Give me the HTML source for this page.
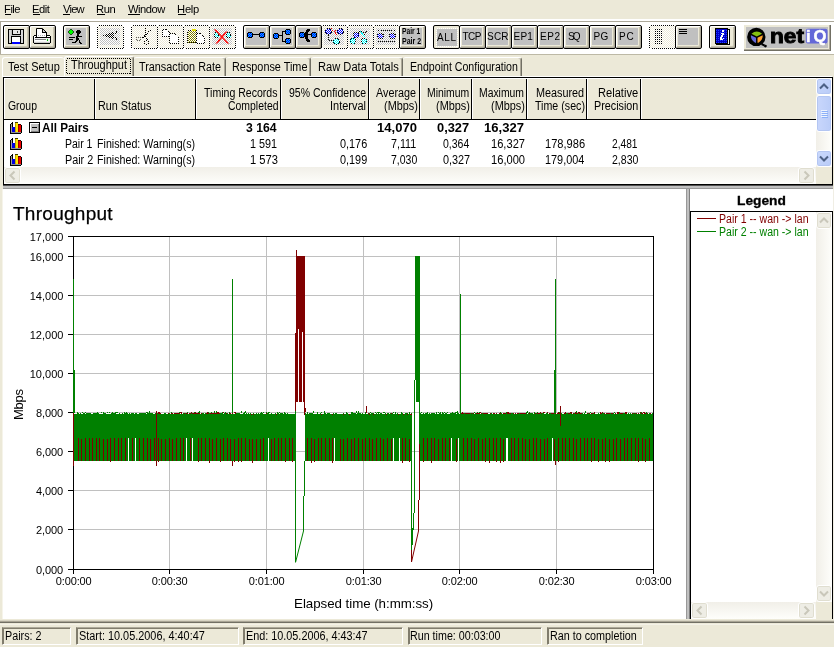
<!DOCTYPE html>
<html lang="en"><head><meta charset="utf-8"><title>Throughput</title>
<style>
html,body{margin:0;padding:0;}
body{width:834px;height:647px;overflow:hidden;background:#ECE9D8;position:relative;font-family:"Liberation Sans", Arial, sans-serif;font-size:11px;}
#app{position:absolute;left:0;top:0;width:834px;height:647px;overflow:hidden;will-change:transform;}
#app div,#app svg{position:absolute;box-sizing:border-box;}
.t{position:absolute;white-space:pre;}
</style></head>
<body><div id="app">
<div style="left:5px;top:14px;width:6px;height:1px;background:#000;"></div>
<div style="left:33px;top:14px;width:7px;height:1px;background:#000;"></div>
<div style="left:63px;top:14px;width:7px;height:1px;background:#000;"></div>
<div style="left:97px;top:14px;width:8px;height:1px;background:#000;"></div>
<div style="left:128px;top:14px;width:12px;height:1px;background:#000;"></div>
<div style="left:178px;top:14px;width:8px;height:1px;background:#000;"></div>
<div style="left:0px;top:19px;width:834px;height:2px;background:#FFFFFF;"></div>
<div style="left:0px;top:21px;width:834px;height:1px;background:#ACA899;"></div>
<div style="left:0px;top:22px;width:834px;height:32px;background:#FFFFFF;"></div>
<div style="left:0px;top:21px;width:1px;height:34px;background:#ACA899;"></div>
<div style="left:0px;top:54px;width:834px;height:1px;background:#BDB9A6;"></div>
<div style="left:3px;top:25px;width:27px;height:24px;border:1px solid #000;border-radius:2px;background:#ECE9D8;box-shadow:inset 1px 1px 0 #fff, inset -1px -1px 0 #ACA899, inset -2px -2px 0 #C9C5B2;"></div>
<div style="left:29px;top:25px;width:27px;height:24px;border:1px solid #000;border-radius:2px;background:#ECE9D8;box-shadow:inset 1px 1px 0 #fff, inset -1px -1px 0 #ACA899, inset -2px -2px 0 #C9C5B2;"></div>
<div style="left:63px;top:25px;width:27px;height:24px;border:1px solid #000;border-radius:2px;background:#ECE9D8;box-shadow:inset 1px 1px 0 #fff, inset -1px -1px 0 #ACA899, inset -2px -2px 0 #C9C5B2;"></div>
<div style="left:66px;top:28px;width:20px;height:17px;background:#C0C0C0;"></div>
<div style="left:243px;top:25px;width:27px;height:24px;border:1px solid #000;border-radius:2px;background:#ECE9D8;box-shadow:inset 1px 1px 0 #fff, inset -1px -1px 0 #ACA899, inset -2px -2px 0 #C9C5B2;"></div>
<div style="left:246px;top:28px;width:20px;height:17px;background:#C0C0C0;"></div>
<div style="left:269px;top:25px;width:27px;height:24px;border:1px solid #000;border-radius:2px;background:#ECE9D8;box-shadow:inset 1px 1px 0 #fff, inset -1px -1px 0 #ACA899, inset -2px -2px 0 #C9C5B2;"></div>
<div style="left:272px;top:28px;width:20px;height:17px;background:#C0C0C0;"></div>
<div style="left:295px;top:25px;width:27px;height:24px;border:1px solid #000;border-radius:2px;background:#ECE9D8;box-shadow:inset 1px 1px 0 #fff, inset -1px -1px 0 #ACA899, inset -2px -2px 0 #C9C5B2;"></div>
<div style="left:298px;top:28px;width:20px;height:17px;background:#C0C0C0;"></div>
<div style="left:399px;top:25px;width:27px;height:24px;border:1px solid #000;border-radius:2px;background:#ECE9D8;box-shadow:inset 1px 1px 0 #fff, inset -1px -1px 0 #ACA899, inset -2px -2px 0 #C9C5B2;"></div>
<div style="left:402px;top:28px;width:20px;height:17px;background:#C0C0C0;"></div>
<div style="left:433px;top:25px;width:27px;height:24px;border:1px solid #000;border-radius:2px;background:#ECE9D8;"></div>
<div style="left:437px;top:29px;width:20px;height:17px;background:#C0C0C0;"></div>
<svg style="left:433px;top:25px" width="27" height="24" viewBox="0 0 27 24" shape-rendering="crispEdges"><rect x="3.5" y="3.5" width="21" height="18" fill="none" stroke="#fff" stroke-dasharray="1 1"/></svg>
<div style="left:459px;top:25px;width:27px;height:24px;border:1px solid #000;border-radius:2px;background:#ECE9D8;box-shadow:inset 1px 1px 0 #fff, inset -1px -1px 0 #ACA899, inset -2px -2px 0 #C9C5B2;"></div>
<div style="left:462px;top:28px;width:20px;height:17px;background:#C0C0C0;"></div>
<div style="left:485px;top:25px;width:27px;height:24px;border:1px solid #000;border-radius:2px;background:#ECE9D8;box-shadow:inset 1px 1px 0 #fff, inset -1px -1px 0 #ACA899, inset -2px -2px 0 #C9C5B2;"></div>
<div style="left:488px;top:28px;width:20px;height:17px;background:#C0C0C0;"></div>
<div style="left:511px;top:25px;width:27px;height:24px;border:1px solid #000;border-radius:2px;background:#ECE9D8;box-shadow:inset 1px 1px 0 #fff, inset -1px -1px 0 #ACA899, inset -2px -2px 0 #C9C5B2;"></div>
<div style="left:514px;top:28px;width:20px;height:17px;background:#C0C0C0;"></div>
<div style="left:537px;top:25px;width:27px;height:24px;border:1px solid #000;border-radius:2px;background:#ECE9D8;box-shadow:inset 1px 1px 0 #fff, inset -1px -1px 0 #ACA899, inset -2px -2px 0 #C9C5B2;"></div>
<div style="left:540px;top:28px;width:20px;height:17px;background:#C0C0C0;"></div>
<div style="left:563px;top:25px;width:27px;height:24px;border:1px solid #000;border-radius:2px;background:#ECE9D8;box-shadow:inset 1px 1px 0 #fff, inset -1px -1px 0 #ACA899, inset -2px -2px 0 #C9C5B2;"></div>
<div style="left:566px;top:28px;width:20px;height:17px;background:#C0C0C0;"></div>
<div style="left:589px;top:25px;width:27px;height:24px;border:1px solid #000;border-radius:2px;background:#ECE9D8;box-shadow:inset 1px 1px 0 #fff, inset -1px -1px 0 #ACA899, inset -2px -2px 0 #C9C5B2;"></div>
<div style="left:592px;top:28px;width:20px;height:17px;background:#C0C0C0;"></div>
<div style="left:615px;top:25px;width:27px;height:24px;border:1px solid #000;border-radius:2px;background:#ECE9D8;box-shadow:inset 1px 1px 0 #fff, inset -1px -1px 0 #ACA899, inset -2px -2px 0 #C9C5B2;"></div>
<div style="left:618px;top:28px;width:20px;height:17px;background:#C0C0C0;"></div>
<div style="left:675px;top:25px;width:27px;height:24px;border:1px solid #000;border-radius:2px;background:#ECE9D8;box-shadow:inset 1px 1px 0 #fff, inset -1px -1px 0 #ACA899, inset -2px -2px 0 #C9C5B2;"></div>
<div style="left:678px;top:28px;width:20px;height:17px;background:#C0C0C0;"></div>
<div style="left:709px;top:25px;width:27px;height:24px;border:1px solid #000;border-radius:2px;background:#ECE9D8;box-shadow:inset 1px 1px 0 #fff, inset -1px -1px 0 #ACA899, inset -2px -2px 0 #C9C5B2;"></div>
<div style="left:743px;top:24px;width:88px;height:27px;background:#ECE9D8;box-shadow:inset 1px 1px 0 #fff, inset -1px -1px 0 #716F64, inset -2px -2px 0 #ACA899;"></div>
<div style="left:746px;top:27px;width:82px;height:21px;background:#C0C0C0;"></div>
<svg style="left:0;top:0" width="834" height="60" viewBox="0 0 834 60" shape-rendering="crispEdges"><defs><pattern id="pb" width="2" height="2" patternUnits="userSpaceOnUse"><rect width="2" height="2" fill="#fff"/><rect width="1" height="1" fill="#ECE9D8"/><rect x="1" y="1" width="1" height="1" fill="#ECE9D8"/></pattern><pattern id="pg" width="2" height="2" patternUnits="userSpaceOnUse"><rect width="2" height="2" fill="#fff"/><rect width="1" height="1" fill="#C0C0C0"/><rect x="1" y="1" width="1" height="1" fill="#C0C0C0"/></pattern><pattern id="pk" width="2" height="2" patternUnits="userSpaceOnUse"><rect width="1" height="1" fill="#000"/><rect x="1" y="1" width="1" height="1" fill="#000"/></pattern><pattern id="pblue" width="2" height="2" patternUnits="userSpaceOnUse"><rect width="2" height="2" fill="#0000FF"/><rect width="1" height="1" fill="#00C0FF"/><rect x="1" y="1" width="1" height="1" fill="#00C0FF"/></pattern><pattern id="pblue2" width="2" height="2" patternUnits="userSpaceOnUse"><rect width="2" height="2" fill="#fff"/><rect width="1" height="1" fill="#0000FF"/><rect x="1" y="1" width="1" height="1" fill="#0000FF"/></pattern><pattern id="pcy" width="2" height="2" patternUnits="userSpaceOnUse"><rect width="2" height="2" fill="#fff"/><rect width="1" height="1" fill="#00FFFF"/><rect x="1" y="1" width="1" height="1" fill="#00FFFF"/></pattern><pattern id="pol" width="2" height="2" patternUnits="userSpaceOnUse"><rect width="2" height="2" fill="#fff"/><rect width="1" height="1" fill="#808000"/><rect x="1" y="1" width="1" height="1" fill="#808000"/></pattern><pattern id="pbook" width="2" height="2" patternUnits="userSpaceOnUse"><rect width="2" height="2" fill="#0000C8"/><rect width="1" height="1" fill="#2040FF"/></pattern></defs><rect x="98" y="26" width="25" height="22" fill="url(#pb)"/><rect x="100" y="28" width="20" height="17" fill="url(#pg)"/><rect x="132" y="26" width="25" height="22" fill="url(#pb)"/><rect x="158" y="26" width="25" height="22" fill="url(#pb)"/><rect x="184" y="26" width="25" height="22" fill="url(#pb)"/><rect x="210" y="26" width="25" height="22" fill="url(#pb)"/><rect x="212" y="28" width="20" height="17" fill="url(#pg)"/><rect x="322" y="26" width="25" height="22" fill="url(#pb)"/><rect x="324" y="28" width="20" height="17" fill="url(#pg)"/><rect x="348" y="26" width="25" height="22" fill="url(#pb)"/><rect x="350" y="28" width="20" height="17" fill="url(#pg)"/><rect x="374" y="26" width="25" height="22" fill="url(#pb)"/><rect x="376" y="28" width="20" height="17" fill="url(#pg)"/><rect x="650" y="26" width="25" height="22" fill="url(#pb)"/><path d="M98.5,25.5 H122.5 M123.5,26.5 V47.5 M122.5,48.5 H98.5 M97.5,47.5 V26.5" fill="none" stroke="#000" stroke-dasharray="1 1"/><path d="M132.5,25.5 H156.5 M157.5,26.5 V47.5 M156.5,48.5 H132.5 M131.5,47.5 V26.5" fill="none" stroke="#000" stroke-dasharray="1 1"/><path d="M158.5,25.5 H182.5 M183.5,26.5 V47.5 M182.5,48.5 H158.5 M157.5,47.5 V26.5" fill="none" stroke="#000" stroke-dasharray="1 1"/><path d="M184.5,25.5 H208.5 M209.5,26.5 V47.5 M208.5,48.5 H184.5 M183.5,47.5 V26.5" fill="none" stroke="#000" stroke-dasharray="1 1"/><path d="M210.5,25.5 H234.5 M235.5,26.5 V47.5 M234.5,48.5 H210.5 M209.5,47.5 V26.5" fill="none" stroke="#000" stroke-dasharray="1 1"/><path d="M322.5,25.5 H346.5 M347.5,26.5 V47.5 M346.5,48.5 H322.5 M321.5,47.5 V26.5" fill="none" stroke="#000" stroke-dasharray="1 1"/><path d="M348.5,25.5 H372.5 M373.5,26.5 V47.5 M372.5,48.5 H348.5 M347.5,47.5 V26.5" fill="none" stroke="#000" stroke-dasharray="1 1"/><path d="M374.5,25.5 H398.5 M399.5,26.5 V47.5 M398.5,48.5 H374.5 M373.5,47.5 V26.5" fill="none" stroke="#000" stroke-dasharray="1 1"/><path d="M650.5,25.5 H674.5 M675.5,26.5 V47.5 M674.5,48.5 H650.5 M649.5,47.5 V26.5" fill="none" stroke="#000" stroke-dasharray="1 1"/><rect x="8" y="29" width="16" height="15" fill="#000"/><rect x="9" y="30" width="14" height="13" fill="#C0C0C0"/><rect x="9" y="30" width="2" height="13" fill="#D8D8D8"/><rect x="21" y="30" width="2" height="13" fill="#D8D8D8"/><rect x="12" y="29" width="9" height="6" fill="#000"/><rect x="13" y="30" width="7" height="4" fill="#E8E8E8"/><rect x="17" y="31" width="1" height="2" fill="#404040"/><rect x="11" y="36" width="10" height="8" fill="#000"/><rect x="12" y="37" width="8" height="5" fill="#FFFFFF"/><rect x="12" y="42" width="8" height="2" fill="#0000FF"/><rect x="34" y="36" width="16" height="7" fill="#F0F0F0"/><rect x="34" y="36" width="16" height="1" fill="#FFFFFF"/><rect x="34" y="42" width="16" height="1" fill="#C8C8C8"/><rect x="34" y="35" width="2" height="1" fill="#000"/><rect x="47" y="35" width="3" height="1" fill="#000"/><rect x="33" y="36" width="1" height="7" fill="#000"/><rect x="50" y="36" width="1" height="7" fill="#000"/><rect x="34" y="43" width="16" height="1" fill="#000"/><path d="M36.5,28.5 H42.5 L46.5,32.5 V37.5 H36.5 Z" fill="#fff" stroke="#000" stroke-width="1" shape-rendering="auto"/><path d="M42.5,28.5 V32.5 H46.5" fill="none" stroke="#000" stroke-width="1"/><rect x="43" y="30" width="1" height="2" fill="#D0D0D0"/><rect x="44" y="31" width="1" height="1" fill="#D0D0D0"/><rect x="38" y="35" width="1" height="1" fill="#B0B0B0"/><rect x="40" y="35" width="1" height="1" fill="#B0B0B0"/><rect x="42" y="35" width="1" height="1" fill="#B0B0B0"/><rect x="44" y="35" width="1" height="1" fill="#B0B0B0"/><rect x="35" y="37" width="15" height="1" fill="#000"/><rect x="35" y="39" width="11" height="1" fill="#808080"/><rect x="35" y="40" width="11" height="1" fill="#FFFFFF"/><rect x="47" y="39" width="1" height="2" fill="#00C000"/><rect x="70" y="29" width="2" height="1" fill="#205020"/><rect x="69" y="30" width="1" height="1" fill="#205020"/><rect x="70" y="30" width="2" height="1" fill="#00FF00"/><rect x="72" y="30" width="1" height="1" fill="#205020"/><rect x="68" y="31" width="1" height="1" fill="#205020"/><rect x="69" y="31" width="4" height="1" fill="#00FF00"/><rect x="73" y="31" width="1" height="1" fill="#205020"/><rect x="68" y="32" width="1" height="1" fill="#205020"/><rect x="69" y="32" width="4" height="1" fill="#00FF00"/><rect x="73" y="32" width="1" height="1" fill="#205020"/><rect x="69" y="33" width="1" height="1" fill="#205020"/><rect x="70" y="33" width="2" height="1" fill="#00FF00"/><rect x="72" y="33" width="1" height="1" fill="#205020"/><rect x="70" y="34" width="2" height="1" fill="#205020"/><rect x="77" y="30" width="3" height="1" fill="#000"/><rect x="76" y="31" width="5" height="1" fill="#000"/><rect x="76" y="32" width="5" height="1" fill="#000"/><rect x="77" y="33" width="3" height="1" fill="#000"/><rect x="77" y="34" width="2" height="1" fill="#000"/><rect x="77" y="35" width="2" height="1" fill="#000"/><rect x="76" y="36" width="6" height="1" fill="#000"/><rect x="69" y="37" width="6" height="1" fill="#000"/><rect x="76" y="37" width="2" height="1" fill="#000"/><rect x="76" y="38" width="3" height="1" fill="#000"/><rect x="69" y="39" width="4" height="1" fill="#000"/><rect x="76" y="39" width="3" height="1" fill="#000"/><rect x="76" y="40" width="2" height="1" fill="#000"/><rect x="79" y="40" width="1" height="1" fill="#000"/><rect x="75" y="41" width="2" height="1" fill="#000"/><rect x="79" y="41" width="1" height="1" fill="#000"/><rect x="72" y="42" width="4" height="1" fill="#000"/><rect x="79" y="42" width="2" height="1" fill="#000"/><rect x="80" y="43" width="2" height="1" fill="#000"/><path d="M102,35.5 L114,32 L114,39.5 Z" fill="url(#pk)"/><path d="M113.5,35.5 L117.5,31 M113.5,35.5 L117.5,40" stroke="#000" stroke-width="1" stroke-dasharray="1 1" fill="none"/><path d="M150.5,30 L142.5,38 M145.5,28 V37 L148.5,41" stroke="#000" stroke-width="1" stroke-dasharray="1 1" fill="none"/><ellipse cx="138.5" cy="39" rx="2.5" ry="2" stroke="#606060" stroke-dasharray="1 1" fill="none"/><ellipse cx="146.5" cy="42.5" rx="2" ry="2" stroke="#000" stroke-dasharray="1 1" fill="none"/><path d="M162.5,29.5 H166.5 L170.5,33.5 V36.5 H162.5 Z" fill="#fff" stroke="#000" stroke-dasharray="1 1"/><path d="M169.5,33.5 H174.5 L178.5,37.5 V43.5 H169.5 Z" fill="#fff" stroke="#000" stroke-dasharray="1 1"/><rect x="188" y="30" width="8" height="13" fill="url(#pol)"/><rect x="187.5" y="30.5" width="9" height="12" fill="none" stroke="#000" stroke-dasharray="1 1"/><rect x="192" y="29" width="4" height="2" fill="#E8E000"/><path d="M196.5,33.5 H200.5 L204.5,37.5 V43.5 H196.5 Z" fill="#fff" stroke="#000" stroke-dasharray="1 1"/><circle cx="216.5" cy="35" r="2.5" fill="url(#pcy)" stroke="#000" stroke-dasharray="1 1"/><circle cx="228.5" cy="35" r="2.5" fill="url(#pcy)" stroke="#000" stroke-dasharray="1 1"/><path d="M214.5,29.5 L227.5,43.5 M215.5,29.5 L228.5,43.5 M226,31.5 L216,43.5 M227,31.5 L217,43.5" stroke="#FF0000" stroke-width="1" fill="none" shape-rendering="auto"/><rect x="253" y="34" width="6" height="1" fill="#000"/><rect x="248" y="32" width="4" height="1" fill="#000"/><rect x="248" y="37" width="4" height="1" fill="#000"/><rect x="247" y="33" width="1" height="4" fill="#000"/><rect x="252" y="33" width="1" height="4" fill="#000"/><rect x="248" y="33" width="4" height="4" fill="url(#pblue)"/><rect x="260" y="32" width="4" height="1" fill="#000"/><rect x="260" y="37" width="4" height="1" fill="#000"/><rect x="259" y="33" width="1" height="4" fill="#000"/><rect x="264" y="33" width="1" height="4" fill="#000"/><rect x="260" y="33" width="4" height="4" fill="url(#pblue)"/><rect x="279" y="35" width="4" height="1" fill="#000"/><rect x="282" y="31" width="1" height="11" fill="#000"/><rect x="282" y="31" width="3" height="1" fill="#000"/><rect x="282" y="41" width="3" height="1" fill="#000"/><rect x="274" y="33" width="4" height="1" fill="#000"/><rect x="274" y="38" width="4" height="1" fill="#000"/><rect x="273" y="34" width="1" height="4" fill="#000"/><rect x="278" y="34" width="1" height="4" fill="#000"/><rect x="274" y="34" width="4" height="4" fill="url(#pblue)"/><rect x="286" y="29" width="4" height="1" fill="#000"/><rect x="286" y="34" width="4" height="1" fill="#000"/><rect x="285" y="30" width="1" height="4" fill="#000"/><rect x="290" y="30" width="1" height="4" fill="#000"/><rect x="286" y="30" width="4" height="4" fill="url(#pblue)"/><rect x="286" y="38" width="4" height="1" fill="#000"/><rect x="286" y="43" width="4" height="1" fill="#000"/><rect x="285" y="39" width="1" height="4" fill="#000"/><rect x="290" y="39" width="1" height="4" fill="#000"/><rect x="286" y="39" width="4" height="4" fill="url(#pblue)"/><rect x="305" y="34" width="6" height="1" fill="#000"/><rect x="307" y="29" width="3" height="1" fill="#000"/><rect x="306" y="30" width="4" height="1" fill="#000"/><rect x="306" y="31" width="3" height="1" fill="#000"/><rect x="305" y="32" width="3" height="1" fill="#000"/><rect x="305" y="33" width="3" height="1" fill="#000"/><rect x="305" y="34" width="3" height="1" fill="#000"/><rect x="305" y="35" width="3" height="1" fill="#000"/><rect x="305" y="36" width="3" height="1" fill="#000"/><rect x="305" y="37" width="3" height="1" fill="#000"/><rect x="305" y="38" width="3" height="1" fill="#000"/><rect x="306" y="39" width="3" height="1" fill="#000"/><rect x="306" y="40" width="4" height="1" fill="#000"/><rect x="307" y="41" width="3" height="1" fill="#000"/><rect x="300" y="32" width="4" height="1" fill="#000"/><rect x="300" y="37" width="4" height="1" fill="#000"/><rect x="299" y="33" width="1" height="4" fill="#000"/><rect x="304" y="33" width="1" height="4" fill="#000"/><rect x="300" y="33" width="4" height="4" fill="url(#pblue)"/><rect x="312" y="32" width="4" height="1" fill="#000"/><rect x="312" y="37" width="4" height="1" fill="#000"/><rect x="311" y="33" width="1" height="4" fill="#000"/><rect x="316" y="33" width="1" height="4" fill="#000"/><rect x="312" y="33" width="4" height="4" fill="url(#pblue)"/><circle cx="328.5" cy="31.5" r="3" fill="url(#pblue2)" stroke="#000" stroke-dasharray="1 1"/><circle cx="340.5" cy="31.5" r="3" fill="url(#pblue2)" stroke="#000" stroke-dasharray="1 1"/><circle cx="336.5" cy="41.5" r="3" fill="url(#pcy)" stroke="#000" stroke-dasharray="1 1"/><path d="M331,28.5 L337,34.5 M336,30 L333,33" stroke="#FF0000" stroke-dasharray="1 1" fill="none"/><path d="M328.5,35 V40.5 H333" stroke="#000" stroke-dasharray="1 1" fill="none"/><circle cx="356" cy="35" r="3" fill="url(#pblue2)" stroke="#000" stroke-dasharray="1 1"/><circle cx="353" cy="41" r="3" fill="url(#pcy)" stroke="#000" stroke-dasharray="1 1"/><circle cx="364" cy="41" r="3" fill="url(#pcy)" stroke="#000" stroke-dasharray="1 1"/><path d="M358,33 L361,31 L364,33 L367,31 M364,34 V38" stroke="#000" stroke-dasharray="1 1" fill="none"/><path d="M360.5,31.5 L364.5,37" stroke="#00FFFF" fill="none"/><circle cx="380.5" cy="36" r="3" fill="url(#pblue2)" stroke="#000" stroke-dasharray="1 1"/><circle cx="392.5" cy="36" r="3" fill="url(#pblue2)" stroke="#000" stroke-dasharray="1 1"/><path d="M378,30.5 L381,33 M395,30.5 L392,33 M378,41.5 H395 M381,30.5 H392" stroke="#000" stroke-dasharray="1 1" fill="none"/><rect x="655" y="29" width="1" height="1" fill="#000"/><rect x="657" y="29" width="1" height="1" fill="#000"/><rect x="659" y="29" width="1" height="1" fill="#000"/><rect x="661" y="29" width="1" height="1" fill="#000"/><rect x="655" y="31" width="1" height="1" fill="#000"/><rect x="657" y="31" width="1" height="1" fill="#000"/><rect x="659" y="31" width="1" height="1" fill="#000"/><rect x="661" y="31" width="1" height="1" fill="#000"/><rect x="655" y="33" width="1" height="1" fill="#000"/><rect x="657" y="33" width="1" height="1" fill="#000"/><rect x="659" y="33" width="1" height="1" fill="#000"/><rect x="661" y="33" width="1" height="1" fill="#000"/><rect x="655" y="35" width="1" height="1" fill="#000"/><rect x="657" y="35" width="1" height="1" fill="#000"/><rect x="659" y="35" width="1" height="1" fill="#000"/><rect x="661" y="35" width="1" height="1" fill="#000"/><rect x="655" y="37" width="1" height="1" fill="#000"/><rect x="657" y="37" width="1" height="1" fill="#000"/><rect x="659" y="37" width="1" height="1" fill="#000"/><rect x="661" y="37" width="1" height="1" fill="#000"/><rect x="655" y="39" width="1" height="1" fill="#000"/><rect x="657" y="39" width="1" height="1" fill="#000"/><rect x="659" y="39" width="1" height="1" fill="#000"/><rect x="661" y="39" width="1" height="1" fill="#000"/><rect x="655" y="41" width="1" height="1" fill="#000"/><rect x="657" y="41" width="1" height="1" fill="#000"/><rect x="659" y="41" width="1" height="1" fill="#000"/><rect x="661" y="41" width="1" height="1" fill="#000"/><rect x="655" y="43" width="1" height="1" fill="#000"/><rect x="657" y="43" width="1" height="1" fill="#000"/><rect x="659" y="43" width="1" height="1" fill="#000"/><rect x="661" y="43" width="1" height="1" fill="#000"/><rect x="679" y="29" width="8" height="1" fill="#000"/><rect x="679" y="31" width="8" height="1" fill="#000"/><rect x="679" y="33" width="8" height="1" fill="#000"/><rect x="716" y="29" width="14" height="16" fill="#000"/><rect x="715" y="28" width="13" height="16" fill="#000"/><rect x="716" y="29" width="11" height="14" fill="url(#pbook)"/><rect x="728" y="30" width="1" height="14" fill="#fff"/><rect x="722" y="30" width="2" height="1" fill="#fff"/><rect x="722" y="31" width="2" height="1" fill="#fff"/><rect x="721" y="33" width="3" height="1" fill="#fff"/><rect x="722" y="34" width="2" height="1" fill="#fff"/><rect x="721" y="35" width="2" height="1" fill="#fff"/><rect x="721" y="36" width="2" height="1" fill="#fff"/><rect x="720" y="37" width="2" height="1" fill="#fff"/><rect x="720" y="38" width="2" height="1" fill="#fff"/><rect x="723" y="38" width="1" height="1" fill="#fff"/><rect x="720" y="39" width="3" height="1" fill="#fff"/><g shape-rendering="auto"><circle cx="756.3" cy="36.9" r="9.2" fill="#000"/><circle cx="756.6" cy="36.9" r="6.3" fill="#000"/><g transform="translate(756.6 37.2) scale(0.9) translate(-756.6 -37.2)"><path d="M756.8,36.4 L750.9,33.4 Q756.8,28.4 762.7,33.4 Z" fill="#84C010"/><path d="M756.0,37.8 L750.3,34.9 Q749.6,39.6 755.0,43.3 L756.0,43.3 Z" fill="#6468D8"/><path d="M757.6,37.8 L763.3,34.9 Q764.0,39.6 758.6,43.3 L757.6,43.3 Z" fill="#FFA030"/></g><circle cx="765.4" cy="46.1" r="1.4" fill="#000"/><path d="M761.5,44 L764.5,45.5" stroke="#000" stroke-width="2"/><rect x="805.8" y="28.8" width="21.7" height="14.7" rx="2" fill="#6468D8"/></g></svg>
<div style="left:2px;top:57px;width:62px;height:19px;background:#ECE9D8;border-top:1px solid #fff;border-left:1px solid #fff;border-radius:3px 3px 0 0;"></div>
<div style="left:64px;top:56px;width:70px;height:20px;background:#ECE9D8;border-left:1px solid #fff;border-top:1px solid #fff;border-right:1px solid #716F64;border-radius:3px 3px 0 0;box-shadow:inset -1px 0 0 #ACA899;"></div>
<svg style="left:0;top:50px" width="300" height="30" viewBox="0 50 300 30" shape-rendering="crispEdges"><rect x="66.5" y="58.5" width="64" height="15" fill="none" stroke="#000" stroke-dasharray="1 1"/></svg>
<div style="left:134px;top:57px;width:92px;height:19px;background:#ECE9D8;border-top:1px solid #fff;border-right:1px solid #716F64;box-shadow:inset -1px 0 0 #ACA899;border-radius:3px 3px 0 0;"></div>
<div style="left:226px;top:57px;width:85px;height:19px;background:#ECE9D8;border-top:1px solid #fff;border-right:1px solid #716F64;box-shadow:inset -1px 0 0 #ACA899;border-radius:3px 3px 0 0;"></div>
<div style="left:311px;top:57px;width:92px;height:19px;background:#ECE9D8;border-top:1px solid #fff;border-right:1px solid #716F64;box-shadow:inset -1px 0 0 #ACA899;border-radius:3px 3px 0 0;"></div>
<div style="left:403px;top:57px;width:119px;height:19px;background:#ECE9D8;border-top:1px solid #fff;border-right:1px solid #716F64;box-shadow:inset -1px 0 0 #ACA899;border-radius:3px 3px 0 0;"></div>
<div style="left:2px;top:76px;width:830px;height:1px;background:#FFFFFF;"></div>
<div style="left:3px;top:77px;width:830px;height:108px;background:#000;"></div>
<div style="left:4px;top:78px;width:828px;height:106px;background:#FFFFFF;"></div>
<div style="left:4px;top:78px;width:812px;height:41px;background:#ECE9D8;"></div>
<div style="left:94px;top:78px;width:1px;height:41px;background:#000;"></div>
<div style="left:95px;top:78px;width:1px;height:41px;background:#FFFFFF;"></div>
<div style="left:195px;top:78px;width:1px;height:41px;background:#000;"></div>
<div style="left:196px;top:78px;width:1px;height:41px;background:#FFFFFF;"></div>
<div style="left:280px;top:78px;width:1px;height:41px;background:#000;"></div>
<div style="left:281px;top:78px;width:1px;height:41px;background:#FFFFFF;"></div>
<div style="left:368px;top:78px;width:1px;height:41px;background:#000;"></div>
<div style="left:369px;top:78px;width:1px;height:41px;background:#FFFFFF;"></div>
<div style="left:419px;top:78px;width:1px;height:41px;background:#000;"></div>
<div style="left:420px;top:78px;width:1px;height:41px;background:#FFFFFF;"></div>
<div style="left:471px;top:78px;width:1px;height:41px;background:#000;"></div>
<div style="left:472px;top:78px;width:1px;height:41px;background:#FFFFFF;"></div>
<div style="left:526px;top:78px;width:1px;height:41px;background:#000;"></div>
<div style="left:527px;top:78px;width:1px;height:41px;background:#FFFFFF;"></div>
<div style="left:586px;top:78px;width:1px;height:41px;background:#000;"></div>
<div style="left:587px;top:78px;width:1px;height:41px;background:#FFFFFF;"></div>
<div style="left:640px;top:78px;width:1px;height:41px;background:#000;"></div>
<div style="left:641px;top:78px;width:1px;height:41px;background:#FFFFFF;"></div>
<div style="left:4px;top:78px;width:812px;height:1px;background:#FFFFFF;"></div>
<div style="left:4px;top:78px;width:1px;height:41px;background:#FFFFFF;"></div>
<div style="left:4px;top:119px;width:812px;height:1px;background:#000;"></div>
<svg style="left:10px;top:122px" width="12" height="12" viewBox="0 0 12 12" shape-rendering="crispEdges"><path d="M0,2 L2,0 V10 L0,12 Z" fill="#A0A0A0"/><rect x="0" y="2" width="1" height="10" fill="#000"/><rect x="1" y="1" width="1" height="1" fill="#000"/><rect x="2" y="0" width="1" height="5" fill="#000"/><rect x="2" y="5" width="3" height="5" fill="#0000E0"/><rect x="5" y="1" width="3" height="9" fill="#FFE800"/><rect x="5" y="0" width="3" height="1" fill="#404000"/><rect x="5" y="1" width="1" height="9" fill="#C0A800"/><rect x="8" y="3" width="3" height="7" fill="#F00000"/><rect x="8" y="2" width="3" height="1" fill="#400000"/><rect x="11" y="3" width="1" height="7" fill="#000"/><rect x="8" y="3" width="1" height="7" fill="#A00000"/><rect x="1" y="10" width="11" height="1" fill="#909090"/><rect x="0" y="11" width="11" height="1" fill="#000"/><rect x="11" y="9" width="1" height="2" fill="#000"/></svg>
<svg style="left:10px;top:138px" width="12" height="12" viewBox="0 0 12 12" shape-rendering="crispEdges"><path d="M0,2 L2,0 V10 L0,12 Z" fill="#A0A0A0"/><rect x="0" y="2" width="1" height="10" fill="#000"/><rect x="1" y="1" width="1" height="1" fill="#000"/><rect x="2" y="0" width="1" height="5" fill="#000"/><rect x="2" y="5" width="3" height="5" fill="#0000E0"/><rect x="5" y="1" width="3" height="9" fill="#FFE800"/><rect x="5" y="0" width="3" height="1" fill="#404000"/><rect x="5" y="1" width="1" height="9" fill="#C0A800"/><rect x="8" y="3" width="3" height="7" fill="#F00000"/><rect x="8" y="2" width="3" height="1" fill="#400000"/><rect x="11" y="3" width="1" height="7" fill="#000"/><rect x="8" y="3" width="1" height="7" fill="#A00000"/><rect x="1" y="10" width="11" height="1" fill="#909090"/><rect x="0" y="11" width="11" height="1" fill="#000"/><rect x="11" y="9" width="1" height="2" fill="#000"/></svg>
<svg style="left:10px;top:154px" width="12" height="12" viewBox="0 0 12 12" shape-rendering="crispEdges"><path d="M0,2 L2,0 V10 L0,12 Z" fill="#A0A0A0"/><rect x="0" y="2" width="1" height="10" fill="#000"/><rect x="1" y="1" width="1" height="1" fill="#000"/><rect x="2" y="0" width="1" height="5" fill="#000"/><rect x="2" y="5" width="3" height="5" fill="#0000E0"/><rect x="5" y="1" width="3" height="9" fill="#FFE800"/><rect x="5" y="0" width="3" height="1" fill="#404000"/><rect x="5" y="1" width="1" height="9" fill="#C0A800"/><rect x="8" y="3" width="3" height="7" fill="#F00000"/><rect x="8" y="2" width="3" height="1" fill="#400000"/><rect x="11" y="3" width="1" height="7" fill="#000"/><rect x="8" y="3" width="1" height="7" fill="#A00000"/><rect x="1" y="10" width="11" height="1" fill="#909090"/><rect x="0" y="11" width="11" height="1" fill="#000"/><rect x="11" y="9" width="1" height="2" fill="#000"/></svg>
<div style="left:29px;top:122px;width:11px;height:11px;border:1px solid #000;background:#C0C0C0;box-shadow:inset 1px 1px 0 #fff, inset -1px -1px 0 #808080;"></div>
<div style="left:32px;top:127px;width:5px;height:1px;background:#000;"></div>
<div style="left:816px;top:78px;width:16px;height:89px;background:linear-gradient(90deg,#F1EFE8,#FEFEFB);"></div>
<div style="left:4px;top:167px;width:812px;height:17px;background:linear-gradient(180deg,#F1EFE8,#FEFEFB);"></div>
<div style="left:816px;top:167px;width:16px;height:17px;background:#ECE9D8;"></div>
<div style="left:816px;top:78px;width:16px;height:17px;border:1px solid #fff;border-radius:3px;background:linear-gradient(135deg,#CBDAFD,#B9CBF7);box-shadow:inset 0 0 0 1px #B4C6F2;"></div>
<svg style="left:0;top:0" width="834" height="647"><path d="M820.0,88.5 L824.0,84.5 L828.0,88.5" fill="none" stroke="#4D6185" stroke-width="2"/></svg>
<div style="left:816px;top:150px;width:16px;height:17px;border:1px solid #fff;border-radius:3px;background:linear-gradient(135deg,#CBDAFD,#B9CBF7);box-shadow:inset 0 0 0 1px #B4C6F2;"></div>
<svg style="left:0;top:0" width="834" height="647"><path d="M820.0,156.5 L824.0,160.5 L828.0,156.5" fill="none" stroke="#4D6185" stroke-width="2"/></svg>
<div style="left:816px;top:95px;width:16px;height:37px;border:1px solid #fff;border-radius:3px;background:linear-gradient(90deg,#C9D7FC,#BACCF8);box-shadow:inset 0 0 0 1px #B4C6F2;"></div>
<div style="left:821px;top:110px;width:6px;height:1px;background:#EEF4FE;"></div>
<div style="left:822px;top:111px;width:6px;height:1px;background:#8CB0F8;"></div>
<div style="left:821px;top:112px;width:6px;height:1px;background:#EEF4FE;"></div>
<div style="left:822px;top:113px;width:6px;height:1px;background:#8CB0F8;"></div>
<div style="left:821px;top:114px;width:6px;height:1px;background:#EEF4FE;"></div>
<div style="left:822px;top:115px;width:6px;height:1px;background:#8CB0F8;"></div>
<div style="left:821px;top:116px;width:6px;height:1px;background:#EEF4FE;"></div>
<div style="left:822px;top:117px;width:6px;height:1px;background:#8CB0F8;"></div>
<div style="left:4px;top:167px;width:17px;height:17px;border:1px solid #fff;border-radius:3px;background:#EEEDE5;box-shadow:inset 0 0 0 1px #E0DED0;"></div>
<svg style="left:0;top:0" width="834" height="647"><path d="M14.5,171.5 L10.5,175.5 L14.5,179.5" fill="none" stroke="#C9C7BA" stroke-width="2"/></svg>
<div style="left:798px;top:167px;width:17px;height:17px;border:1px solid #fff;border-radius:3px;background:#EEEDE5;box-shadow:inset 0 0 0 1px #E0DED0;"></div>
<svg style="left:0;top:0" width="834" height="647"><path d="M804.5,171.5 L808.5,175.5 L804.5,179.5" fill="none" stroke="#C9C7BA" stroke-width="2"/></svg>
<div style="left:3px;top:185px;width:830px;height:1px;background:#505050;"></div>
<div style="left:3px;top:186px;width:830px;height:2px;background:#C0C0C0;"></div>
<div style="left:3px;top:188px;width:830px;height:1px;background:#989898;"></div>
<div style="left:2px;top:189px;width:1px;height:430px;background:#F6F4EA;"></div>
<div style="left:3px;top:189px;width:683px;height:430px;background:#FFFFFF;"></div>
<div style="left:690px;top:189px;width:144px;height:430px;background:#FFFFFF;"></div>
<div style="left:686px;top:189px;width:1px;height:430px;background:#989898;"></div>
<div style="left:687px;top:189px;width:2px;height:430px;background:#C0C0C0;"></div>
<div style="left:689px;top:189px;width:1px;height:430px;background:#808080;"></div>
<svg style="left:0;top:189px" width="686" height="430" viewBox="0 189 686 430" shape-rendering="crispEdges"><rect x="74" y="529" width="579" height="1" fill="#C0C0C0"/><rect x="74" y="490" width="579" height="1" fill="#C0C0C0"/><rect x="74" y="451" width="579" height="1" fill="#C0C0C0"/><rect x="74" y="412" width="579" height="1" fill="#C0C0C0"/><rect x="74" y="373" width="579" height="1" fill="#C0C0C0"/><rect x="74" y="334" width="579" height="1" fill="#C0C0C0"/><rect x="74" y="295" width="579" height="1" fill="#C0C0C0"/><rect x="74" y="256" width="579" height="1" fill="#C0C0C0"/><rect x="169" y="237" width="1" height="332" fill="#C0C0C0"/><rect x="266" y="237" width="1" height="332" fill="#C0C0C0"/><rect x="363" y="237" width="1" height="332" fill="#C0C0C0"/><rect x="459" y="237" width="1" height="332" fill="#C0C0C0"/><rect x="556" y="237" width="1" height="332" fill="#C0C0C0"/><rect x="73" y="236" width="581" height="1" fill="#000"/><rect x="73" y="569" width="581" height="1" fill="#000"/><rect x="73" y="236" width="1" height="334" fill="#000"/><rect x="653" y="236" width="1" height="334" fill="#000"/><rect x="68" y="569" width="5" height="1" fill="#000"/><rect x="68" y="529" width="5" height="1" fill="#000"/><rect x="68" y="490" width="5" height="1" fill="#000"/><rect x="68" y="451" width="5" height="1" fill="#000"/><rect x="68" y="412" width="5" height="1" fill="#000"/><rect x="68" y="373" width="5" height="1" fill="#000"/><rect x="68" y="334" width="5" height="1" fill="#000"/><rect x="68" y="295" width="5" height="1" fill="#000"/><rect x="68" y="256" width="5" height="1" fill="#000"/><rect x="68" y="236" width="5" height="1" fill="#000"/><rect x="73" y="570" width="1" height="4" fill="#000"/><rect x="169" y="570" width="1" height="4" fill="#000"/><rect x="266" y="570" width="1" height="4" fill="#000"/><rect x="363" y="570" width="1" height="4" fill="#000"/><rect x="459" y="570" width="1" height="4" fill="#000"/><rect x="556" y="570" width="1" height="4" fill="#000"/><rect x="653" y="570" width="1" height="4" fill="#000"/><rect x="74" y="413" width="222" height="48" fill="#008000"/><rect x="305" y="413" width="107" height="48" fill="#008000"/><rect x="420" y="413" width="233" height="48" fill="#008000"/><rect x="74" y="413" width="1" height="1" fill="#fff"/><rect x="74" y="412" width="1" height="1" fill="#008000"/><rect x="75" y="413" width="1" height="1" fill="#fff"/><rect x="76" y="413" width="1" height="1" fill="#fff"/><rect x="77" y="412" width="1" height="1" fill="#008000"/><rect x="79" y="413" width="1" height="1" fill="#fff"/><rect x="81" y="413" width="1" height="1" fill="#fff"/><rect x="82" y="413" width="1" height="1" fill="#fff"/><rect x="82" y="412" width="1" height="1" fill="#008000"/><rect x="85" y="413" width="1" height="1" fill="#fff"/><rect x="85" y="412" width="1" height="1" fill="#008000"/><rect x="91" y="413" width="1" height="1" fill="#fff"/><rect x="92" y="413" width="1" height="1" fill="#fff"/><rect x="97" y="412" width="1" height="1" fill="#008000"/><rect x="99" y="413" width="1" height="1" fill="#fff"/><rect x="100" y="413" width="1" height="1" fill="#fff"/><rect x="101" y="413" width="1" height="1" fill="#fff"/><rect x="101" y="412" width="1" height="1" fill="#008000"/><rect x="102" y="413" width="1" height="1" fill="#fff"/><rect x="103" y="412" width="1" height="1" fill="#008000"/><rect x="106" y="413" width="1" height="1" fill="#fff"/><rect x="107" y="413" width="1" height="1" fill="#fff"/><rect x="107" y="412" width="1" height="1" fill="#008000"/><rect x="108" y="413" width="1" height="1" fill="#fff"/><rect x="109" y="413" width="1" height="1" fill="#fff"/><rect x="109" y="412" width="1" height="1" fill="#008000"/><rect x="110" y="413" width="1" height="1" fill="#fff"/><rect x="112" y="412" width="1" height="1" fill="#008000"/><rect x="115" y="412" width="1" height="1" fill="#008000"/><rect x="116" y="413" width="1" height="1" fill="#fff"/><rect x="116" y="412" width="1" height="1" fill="#008000"/><rect x="117" y="413" width="1" height="1" fill="#fff"/><rect x="117" y="412" width="1" height="1" fill="#008000"/><rect x="118" y="413" width="1" height="1" fill="#fff"/><rect x="120" y="413" width="1" height="1" fill="#fff"/><rect x="121" y="413" width="1" height="1" fill="#fff"/><rect x="123" y="413" width="1" height="1" fill="#fff"/><rect x="124" y="412" width="1" height="1" fill="#008000"/><rect x="126" y="412" width="1" height="1" fill="#008000"/><rect x="128" y="413" width="1" height="1" fill="#fff"/><rect x="130" y="413" width="1" height="1" fill="#fff"/><rect x="134" y="413" width="1" height="1" fill="#fff"/><rect x="137" y="413" width="1" height="1" fill="#fff"/><rect x="138" y="413" width="1" height="1" fill="#fff"/><rect x="146" y="413" width="1" height="1" fill="#fff"/><rect x="146" y="412" width="1" height="1" fill="#008000"/><rect x="147" y="412" width="1" height="1" fill="#008000"/><rect x="149" y="412" width="1" height="1" fill="#008000"/><rect x="149" y="411" width="1" height="2" fill="#008000"/><rect x="153" y="413" width="1" height="1" fill="#fff"/><rect x="154" y="413" width="1" height="1" fill="#fff"/><rect x="156" y="413" width="1" height="1" fill="#fff"/><rect x="158" y="413" width="1" height="1" fill="#800000"/><rect x="158" y="412" width="1" height="1" fill="#800000"/><rect x="159" y="413" width="1" height="1" fill="#800000"/><rect x="159" y="412" width="1" height="1" fill="#800000"/><rect x="160" y="413" width="1" height="1" fill="#800000"/><rect x="161" y="413" width="1" height="1" fill="#fff"/><rect x="162" y="413" width="1" height="1" fill="#fff"/><rect x="163" y="413" width="1" height="1" fill="#fff"/><rect x="166" y="413" width="1" height="1" fill="#fff"/><rect x="167" y="413" width="1" height="1" fill="#fff"/><rect x="168" y="413" width="1" height="1" fill="#800000"/><rect x="170" y="413" width="1" height="1" fill="#fff"/><rect x="171" y="413" width="1" height="1" fill="#800000"/><rect x="171" y="412" width="1" height="1" fill="#008000"/><rect x="172" y="413" width="1" height="1" fill="#800000"/><rect x="173" y="413" width="1" height="1" fill="#fff"/><rect x="174" y="413" width="1" height="1" fill="#800000"/><rect x="175" y="413" width="1" height="1" fill="#800000"/><rect x="176" y="413" width="1" height="1" fill="#800000"/><rect x="177" y="413" width="1" height="1" fill="#800000"/><rect x="178" y="413" width="1" height="1" fill="#800000"/><rect x="179" y="413" width="1" height="1" fill="#800000"/><rect x="179" y="412" width="1" height="1" fill="#008000"/><rect x="180" y="413" width="1" height="1" fill="#fff"/><rect x="180" y="412" width="1" height="1" fill="#800000"/><rect x="181" y="413" width="1" height="1" fill="#800000"/><rect x="181" y="412" width="1" height="1" fill="#800000"/><rect x="182" y="413" width="1" height="1" fill="#fff"/><rect x="184" y="413" width="1" height="1" fill="#800000"/><rect x="186" y="413" width="1" height="1" fill="#800000"/><rect x="187" y="413" width="1" height="1" fill="#800000"/><rect x="187" y="412" width="1" height="1" fill="#008000"/><rect x="188" y="413" width="1" height="1" fill="#fff"/><rect x="189" y="413" width="1" height="1" fill="#800000"/><rect x="190" y="413" width="1" height="1" fill="#800000"/><rect x="191" y="412" width="1" height="1" fill="#800000"/><rect x="192" y="413" width="1" height="1" fill="#800000"/><rect x="193" y="413" width="1" height="1" fill="#800000"/><rect x="194" y="413" width="1" height="1" fill="#800000"/><rect x="194" y="412" width="1" height="1" fill="#008000"/><rect x="195" y="413" width="1" height="1" fill="#800000"/><rect x="195" y="412" width="1" height="1" fill="#800000"/><rect x="196" y="413" width="1" height="1" fill="#800000"/><rect x="197" y="413" width="1" height="1" fill="#800000"/><rect x="198" y="413" width="1" height="1" fill="#800000"/><rect x="198" y="412" width="1" height="1" fill="#008000"/><rect x="199" y="413" width="1" height="1" fill="#800000"/><rect x="199" y="411" width="1" height="2" fill="#008000"/><rect x="200" y="413" width="1" height="1" fill="#fff"/><rect x="201" y="413" width="1" height="1" fill="#800000"/><rect x="204" y="413" width="1" height="1" fill="#fff"/><rect x="206" y="413" width="1" height="1" fill="#800000"/><rect x="207" y="413" width="1" height="1" fill="#800000"/><rect x="207" y="412" width="1" height="1" fill="#800000"/><rect x="208" y="413" width="1" height="1" fill="#800000"/><rect x="208" y="412" width="1" height="1" fill="#008000"/><rect x="210" y="413" width="1" height="1" fill="#800000"/><rect x="211" y="413" width="1" height="1" fill="#800000"/><rect x="211" y="412" width="1" height="1" fill="#008000"/><rect x="212" y="413" width="1" height="1" fill="#800000"/><rect x="213" y="413" width="1" height="1" fill="#800000"/><rect x="214" y="413" width="1" height="1" fill="#800000"/><rect x="214" y="411" width="1" height="2" fill="#008000"/><rect x="215" y="413" width="1" height="1" fill="#800000"/><rect x="216" y="413" width="1" height="1" fill="#800000"/><rect x="216" y="411" width="1" height="2" fill="#008000"/><rect x="217" y="413" width="1" height="1" fill="#800000"/><rect x="217" y="412" width="1" height="1" fill="#800000"/><rect x="218" y="413" width="1" height="1" fill="#800000"/><rect x="218" y="412" width="1" height="1" fill="#800000"/><rect x="219" y="413" width="1" height="1" fill="#800000"/><rect x="222" y="412" width="1" height="1" fill="#008000"/><rect x="223" y="413" width="1" height="1" fill="#fff"/><rect x="223" y="412" width="1" height="1" fill="#800000"/><rect x="225" y="412" width="1" height="1" fill="#008000"/><rect x="226" y="413" width="1" height="1" fill="#800000"/><rect x="228" y="413" width="1" height="1" fill="#fff"/><rect x="229" y="413" width="1" height="1" fill="#800000"/><rect x="229" y="412" width="1" height="1" fill="#008000"/><rect x="230" y="413" width="1" height="1" fill="#800000"/><rect x="231" y="413" width="1" height="1" fill="#fff"/><rect x="232" y="413" width="1" height="1" fill="#800000"/><rect x="232" y="412" width="1" height="1" fill="#800000"/><rect x="233" y="413" width="1" height="1" fill="#fff"/><rect x="234" y="413" width="1" height="1" fill="#fff"/><rect x="234" y="412" width="1" height="1" fill="#800000"/><rect x="235" y="413" width="1" height="1" fill="#800000"/><rect x="235" y="412" width="1" height="1" fill="#800000"/><rect x="240" y="413" width="1" height="1" fill="#fff"/><rect x="241" y="413" width="1" height="1" fill="#fff"/><rect x="241" y="411" width="1" height="2" fill="#008000"/><rect x="242" y="413" width="1" height="1" fill="#fff"/><rect x="244" y="412" width="1" height="1" fill="#008000"/><rect x="245" y="413" width="1" height="1" fill="#fff"/><rect x="245" y="411" width="1" height="2" fill="#008000"/><rect x="247" y="413" width="1" height="1" fill="#fff"/><rect x="249" y="413" width="1" height="1" fill="#fff"/><rect x="251" y="413" width="1" height="1" fill="#fff"/><rect x="251" y="414" width="1" height="1" fill="#800000"/><rect x="252" y="413" width="1" height="1" fill="#fff"/><rect x="253" y="414" width="1" height="1" fill="#800000"/><rect x="254" y="413" width="1" height="1" fill="#fff"/><rect x="255" y="413" width="1" height="1" fill="#fff"/><rect x="257" y="413" width="1" height="1" fill="#fff"/><rect x="259" y="413" width="1" height="1" fill="#fff"/><rect x="261" y="412" width="1" height="1" fill="#008000"/><rect x="263" y="413" width="1" height="1" fill="#fff"/><rect x="263" y="412" width="1" height="1" fill="#008000"/><rect x="264" y="413" width="1" height="1" fill="#fff"/><rect x="265" y="413" width="1" height="1" fill="#fff"/><rect x="266" y="413" width="1" height="1" fill="#800000"/><rect x="266" y="412" width="1" height="1" fill="#008000"/><rect x="268" y="412" width="1" height="1" fill="#008000"/><rect x="269" y="413" width="1" height="1" fill="#fff"/><rect x="269" y="412" width="1" height="1" fill="#008000"/><rect x="270" y="413" width="1" height="1" fill="#fff"/><rect x="272" y="413" width="1" height="1" fill="#fff"/><rect x="273" y="413" width="1" height="1" fill="#fff"/><rect x="274" y="413" width="1" height="1" fill="#fff"/><rect x="276" y="413" width="1" height="1" fill="#fff"/><rect x="276" y="414" width="1" height="1" fill="#800000"/><rect x="277" y="412" width="1" height="1" fill="#008000"/><rect x="279" y="413" width="1" height="1" fill="#fff"/><rect x="279" y="412" width="1" height="1" fill="#008000"/><rect x="283" y="413" width="1" height="1" fill="#fff"/><rect x="284" y="412" width="1" height="1" fill="#008000"/><rect x="286" y="413" width="1" height="1" fill="#fff"/><rect x="288" y="413" width="1" height="1" fill="#fff"/><rect x="289" y="413" width="1" height="1" fill="#fff"/><rect x="290" y="413" width="1" height="1" fill="#fff"/><rect x="291" y="413" width="1" height="1" fill="#fff"/><rect x="292" y="413" width="1" height="1" fill="#fff"/><rect x="293" y="413" width="1" height="1" fill="#fff"/><rect x="294" y="413" width="1" height="1" fill="#fff"/><rect x="306" y="413" width="1" height="1" fill="#fff"/><rect x="307" y="412" width="1" height="1" fill="#008000"/><rect x="308" y="413" width="1" height="1" fill="#fff"/><rect x="313" y="413" width="1" height="1" fill="#fff"/><rect x="313" y="412" width="1" height="1" fill="#008000"/><rect x="313" y="411" width="1" height="2" fill="#008000"/><rect x="314" y="413" width="1" height="1" fill="#fff"/><rect x="315" y="413" width="1" height="1" fill="#fff"/><rect x="316" y="413" width="1" height="1" fill="#fff"/><rect x="317" y="412" width="1" height="1" fill="#008000"/><rect x="318" y="413" width="1" height="1" fill="#fff"/><rect x="319" y="413" width="1" height="1" fill="#fff"/><rect x="321" y="413" width="1" height="1" fill="#fff"/><rect x="321" y="414" width="1" height="1" fill="#800000"/><rect x="321" y="412" width="1" height="1" fill="#008000"/><rect x="322" y="413" width="1" height="1" fill="#fff"/><rect x="323" y="413" width="1" height="1" fill="#fff"/><rect x="324" y="411" width="1" height="2" fill="#008000"/><rect x="326" y="413" width="1" height="1" fill="#fff"/><rect x="330" y="413" width="1" height="1" fill="#fff"/><rect x="331" y="413" width="1" height="1" fill="#fff"/><rect x="332" y="413" width="1" height="1" fill="#fff"/><rect x="332" y="414" width="1" height="1" fill="#800000"/><rect x="334" y="413" width="1" height="1" fill="#fff"/><rect x="337" y="413" width="1" height="1" fill="#fff"/><rect x="338" y="413" width="1" height="1" fill="#fff"/><rect x="339" y="413" width="1" height="1" fill="#fff"/><rect x="340" y="413" width="1" height="1" fill="#fff"/><rect x="341" y="413" width="1" height="1" fill="#fff"/><rect x="342" y="413" width="1" height="1" fill="#fff"/><rect x="343" y="414" width="1" height="1" fill="#800000"/><rect x="344" y="413" width="1" height="1" fill="#fff"/><rect x="345" y="413" width="1" height="1" fill="#fff"/><rect x="346" y="412" width="1" height="1" fill="#008000"/><rect x="348" y="413" width="1" height="1" fill="#fff"/><rect x="349" y="413" width="1" height="1" fill="#fff"/><rect x="349" y="414" width="1" height="1" fill="#800000"/><rect x="350" y="413" width="1" height="1" fill="#fff"/><rect x="351" y="412" width="1" height="1" fill="#008000"/><rect x="352" y="412" width="1" height="1" fill="#008000"/><rect x="356" y="413" width="1" height="1" fill="#fff"/><rect x="356" y="411" width="1" height="2" fill="#008000"/><rect x="358" y="412" width="1" height="1" fill="#008000"/><rect x="358" y="411" width="1" height="2" fill="#008000"/><rect x="361" y="413" width="1" height="1" fill="#fff"/><rect x="363" y="413" width="1" height="1" fill="#fff"/><rect x="364" y="413" width="1" height="1" fill="#fff"/><rect x="365" y="412" width="1" height="1" fill="#008000"/><rect x="366" y="413" width="1" height="1" fill="#fff"/><rect x="367" y="413" width="1" height="1" fill="#fff"/><rect x="368" y="413" width="1" height="1" fill="#800000"/><rect x="369" y="414" width="1" height="1" fill="#800000"/><rect x="370" y="413" width="1" height="1" fill="#fff"/><rect x="370" y="412" width="1" height="1" fill="#008000"/><rect x="373" y="414" width="1" height="1" fill="#800000"/><rect x="374" y="413" width="1" height="1" fill="#fff"/><rect x="375" y="413" width="1" height="1" fill="#fff"/><rect x="375" y="412" width="1" height="1" fill="#008000"/><rect x="377" y="413" width="1" height="1" fill="#fff"/><rect x="377" y="412" width="1" height="1" fill="#008000"/><rect x="378" y="412" width="1" height="1" fill="#008000"/><rect x="379" y="413" width="1" height="1" fill="#fff"/><rect x="379" y="412" width="1" height="1" fill="#008000"/><rect x="382" y="413" width="1" height="1" fill="#fff"/><rect x="383" y="413" width="1" height="1" fill="#fff"/><rect x="383" y="412" width="1" height="1" fill="#008000"/><rect x="384" y="413" width="1" height="1" fill="#fff"/><rect x="384" y="412" width="1" height="1" fill="#008000"/><rect x="386" y="413" width="1" height="1" fill="#fff"/><rect x="386" y="414" width="1" height="1" fill="#800000"/><rect x="389" y="413" width="1" height="1" fill="#fff"/><rect x="391" y="413" width="1" height="1" fill="#800000"/><rect x="393" y="413" width="1" height="1" fill="#fff"/><rect x="393" y="412" width="1" height="1" fill="#008000"/><rect x="394" y="413" width="1" height="1" fill="#fff"/><rect x="395" y="412" width="1" height="1" fill="#008000"/><rect x="396" y="413" width="1" height="1" fill="#fff"/><rect x="398" y="413" width="1" height="1" fill="#fff"/><rect x="398" y="414" width="1" height="1" fill="#800000"/><rect x="399" y="413" width="1" height="1" fill="#fff"/><rect x="400" y="413" width="1" height="1" fill="#fff"/><rect x="401" y="412" width="1" height="1" fill="#008000"/><rect x="403" y="413" width="1" height="1" fill="#fff"/><rect x="403" y="414" width="1" height="1" fill="#800000"/><rect x="404" y="413" width="1" height="1" fill="#fff"/><rect x="407" y="414" width="1" height="1" fill="#800000"/><rect x="408" y="413" width="1" height="1" fill="#fff"/><rect x="409" y="412" width="1" height="1" fill="#008000"/><rect x="410" y="413" width="1" height="1" fill="#fff"/><rect x="410" y="414" width="1" height="1" fill="#800000"/><rect x="411" y="414" width="1" height="1" fill="#800000"/><rect x="421" y="413" width="1" height="1" fill="#fff"/><rect x="421" y="412" width="1" height="1" fill="#008000"/><rect x="422" y="413" width="1" height="1" fill="#fff"/><rect x="424" y="413" width="1" height="1" fill="#fff"/><rect x="427" y="412" width="1" height="1" fill="#008000"/><rect x="428" y="413" width="1" height="1" fill="#fff"/><rect x="430" y="413" width="1" height="1" fill="#fff"/><rect x="435" y="413" width="1" height="1" fill="#fff"/><rect x="436" y="412" width="1" height="1" fill="#008000"/><rect x="437" y="413" width="1" height="1" fill="#fff"/><rect x="438" y="413" width="1" height="1" fill="#fff"/><rect x="438" y="412" width="1" height="1" fill="#008000"/><rect x="440" y="412" width="1" height="1" fill="#008000"/><rect x="441" y="413" width="1" height="1" fill="#fff"/><rect x="442" y="412" width="1" height="1" fill="#008000"/><rect x="444" y="413" width="1" height="1" fill="#fff"/><rect x="444" y="412" width="1" height="1" fill="#008000"/><rect x="447" y="413" width="1" height="1" fill="#fff"/><rect x="447" y="412" width="1" height="1" fill="#008000"/><rect x="448" y="413" width="1" height="1" fill="#fff"/><rect x="449" y="413" width="1" height="1" fill="#fff"/><rect x="452" y="412" width="1" height="1" fill="#008000"/><rect x="455" y="412" width="1" height="1" fill="#008000"/><rect x="456" y="413" width="1" height="1" fill="#fff"/><rect x="456" y="412" width="1" height="1" fill="#008000"/><rect x="457" y="411" width="1" height="2" fill="#008000"/><rect x="459" y="413" width="1" height="1" fill="#fff"/><rect x="461" y="413" width="1" height="1" fill="#800000"/><rect x="462" y="413" width="1" height="1" fill="#800000"/><rect x="462" y="412" width="1" height="1" fill="#800000"/><rect x="463" y="413" width="1" height="1" fill="#800000"/><rect x="465" y="413" width="1" height="1" fill="#800000"/><rect x="466" y="413" width="1" height="1" fill="#800000"/><rect x="467" y="413" width="1" height="1" fill="#800000"/><rect x="468" y="413" width="1" height="1" fill="#800000"/><rect x="469" y="413" width="1" height="1" fill="#800000"/><rect x="471" y="413" width="1" height="1" fill="#800000"/><rect x="473" y="413" width="1" height="1" fill="#800000"/><rect x="474" y="413" width="1" height="1" fill="#fff"/><rect x="474" y="412" width="1" height="1" fill="#008000"/><rect x="476" y="413" width="1" height="1" fill="#800000"/><rect x="477" y="413" width="1" height="1" fill="#800000"/><rect x="477" y="412" width="1" height="1" fill="#008000"/><rect x="478" y="413" width="1" height="1" fill="#800000"/><rect x="479" y="413" width="1" height="1" fill="#800000"/><rect x="479" y="412" width="1" height="1" fill="#008000"/><rect x="480" y="413" width="1" height="1" fill="#fff"/><rect x="480" y="412" width="1" height="1" fill="#800000"/><rect x="481" y="413" width="1" height="1" fill="#800000"/><rect x="483" y="413" width="1" height="1" fill="#800000"/><rect x="484" y="413" width="1" height="1" fill="#800000"/><rect x="485" y="413" width="1" height="1" fill="#800000"/><rect x="486" y="413" width="1" height="1" fill="#800000"/><rect x="487" y="413" width="1" height="1" fill="#800000"/><rect x="488" y="413" width="1" height="1" fill="#fff"/><rect x="489" y="413" width="1" height="1" fill="#fff"/><rect x="490" y="413" width="1" height="1" fill="#800000"/><rect x="492" y="413" width="1" height="1" fill="#fff"/><rect x="493" y="413" width="1" height="1" fill="#800000"/><rect x="494" y="413" width="1" height="1" fill="#800000"/><rect x="495" y="413" width="1" height="1" fill="#fff"/><rect x="496" y="413" width="1" height="1" fill="#800000"/><rect x="497" y="413" width="1" height="1" fill="#fff"/><rect x="498" y="413" width="1" height="1" fill="#fff"/><rect x="499" y="413" width="1" height="1" fill="#800000"/><rect x="500" y="413" width="1" height="1" fill="#800000"/><rect x="500" y="412" width="1" height="1" fill="#008000"/><rect x="502" y="413" width="1" height="1" fill="#fff"/><rect x="503" y="413" width="1" height="1" fill="#800000"/><rect x="504" y="413" width="1" height="1" fill="#800000"/><rect x="505" y="413" width="1" height="1" fill="#800000"/><rect x="506" y="412" width="1" height="1" fill="#008000"/><rect x="507" y="413" width="1" height="1" fill="#800000"/><rect x="507" y="412" width="1" height="1" fill="#800000"/><rect x="508" y="413" width="1" height="1" fill="#800000"/><rect x="508" y="412" width="1" height="1" fill="#800000"/><rect x="509" y="413" width="1" height="1" fill="#800000"/><rect x="510" y="413" width="1" height="1" fill="#800000"/><rect x="513" y="413" width="1" height="1" fill="#800000"/><rect x="514" y="413" width="1" height="1" fill="#fff"/><rect x="515" y="413" width="1" height="1" fill="#800000"/><rect x="516" y="413" width="1" height="1" fill="#fff"/><rect x="517" y="413" width="1" height="1" fill="#800000"/><rect x="518" y="413" width="1" height="1" fill="#800000"/><rect x="520" y="413" width="1" height="1" fill="#800000"/><rect x="521" y="413" width="1" height="1" fill="#800000"/><rect x="522" y="413" width="1" height="1" fill="#800000"/><rect x="523" y="413" width="1" height="1" fill="#800000"/><rect x="524" y="413" width="1" height="1" fill="#800000"/><rect x="525" y="413" width="1" height="1" fill="#800000"/><rect x="526" y="412" width="1" height="1" fill="#008000"/><rect x="527" y="413" width="1" height="1" fill="#fff"/><rect x="527" y="412" width="1" height="1" fill="#800000"/><rect x="527" y="411" width="1" height="2" fill="#008000"/><rect x="529" y="413" width="1" height="1" fill="#800000"/><rect x="529" y="412" width="1" height="1" fill="#008000"/><rect x="533" y="413" width="1" height="1" fill="#fff"/><rect x="534" y="412" width="1" height="1" fill="#008000"/><rect x="535" y="413" width="1" height="1" fill="#800000"/><rect x="537" y="413" width="1" height="1" fill="#800000"/><rect x="537" y="412" width="1" height="1" fill="#008000"/><rect x="538" y="413" width="1" height="1" fill="#800000"/><rect x="539" y="413" width="1" height="1" fill="#800000"/><rect x="540" y="412" width="1" height="1" fill="#800000"/><rect x="541" y="413" width="1" height="1" fill="#800000"/><rect x="543" y="412" width="1" height="1" fill="#800000"/><rect x="544" y="413" width="1" height="1" fill="#fff"/><rect x="544" y="412" width="1" height="1" fill="#800000"/><rect x="545" y="413" width="1" height="1" fill="#fff"/><rect x="547" y="412" width="1" height="1" fill="#800000"/><rect x="548" y="413" width="1" height="1" fill="#fff"/><rect x="549" y="413" width="1" height="1" fill="#800000"/><rect x="551" y="413" width="1" height="1" fill="#800000"/><rect x="552" y="413" width="1" height="1" fill="#800000"/><rect x="553" y="413" width="1" height="1" fill="#800000"/><rect x="555" y="413" width="1" height="1" fill="#800000"/><rect x="556" y="413" width="1" height="1" fill="#fff"/><rect x="557" y="413" width="1" height="1" fill="#800000"/><rect x="558" y="413" width="1" height="1" fill="#800000"/><rect x="558" y="412" width="1" height="1" fill="#800000"/><rect x="559" y="413" width="1" height="1" fill="#800000"/><rect x="559" y="412" width="1" height="1" fill="#008000"/><rect x="560" y="413" width="1" height="1" fill="#fff"/><rect x="562" y="413" width="1" height="1" fill="#fff"/><rect x="563" y="413" width="1" height="1" fill="#fff"/><rect x="564" y="413" width="1" height="1" fill="#800000"/><rect x="565" y="413" width="1" height="1" fill="#800000"/><rect x="565" y="412" width="1" height="1" fill="#800000"/><rect x="568" y="413" width="1" height="1" fill="#800000"/><rect x="569" y="413" width="1" height="1" fill="#800000"/><rect x="570" y="412" width="1" height="1" fill="#800000"/><rect x="571" y="413" width="1" height="1" fill="#800000"/><rect x="571" y="412" width="1" height="1" fill="#800000"/><rect x="572" y="413" width="1" height="1" fill="#fff"/><rect x="573" y="413" width="1" height="1" fill="#800000"/><rect x="575" y="413" width="1" height="1" fill="#800000"/><rect x="575" y="412" width="1" height="1" fill="#800000"/><rect x="576" y="413" width="1" height="1" fill="#800000"/><rect x="576" y="412" width="1" height="1" fill="#008000"/><rect x="576" y="411" width="1" height="2" fill="#008000"/><rect x="577" y="413" width="1" height="1" fill="#800000"/><rect x="578" y="412" width="1" height="1" fill="#800000"/><rect x="579" y="413" width="1" height="1" fill="#800000"/><rect x="579" y="412" width="1" height="1" fill="#800000"/><rect x="580" y="413" width="1" height="1" fill="#800000"/><rect x="581" y="413" width="1" height="1" fill="#800000"/><rect x="583" y="413" width="1" height="1" fill="#fff"/><rect x="585" y="413" width="1" height="1" fill="#fff"/><rect x="585" y="412" width="1" height="1" fill="#800000"/><rect x="585" y="411" width="1" height="2" fill="#008000"/><rect x="586" y="413" width="1" height="1" fill="#fff"/><rect x="587" y="413" width="1" height="1" fill="#800000"/><rect x="589" y="413" width="1" height="1" fill="#800000"/><rect x="590" y="413" width="1" height="1" fill="#fff"/><rect x="590" y="412" width="1" height="1" fill="#008000"/><rect x="591" y="413" width="1" height="1" fill="#800000"/><rect x="592" y="413" width="1" height="1" fill="#800000"/><rect x="594" y="413" width="1" height="1" fill="#800000"/><rect x="594" y="412" width="1" height="1" fill="#800000"/><rect x="595" y="413" width="1" height="1" fill="#fff"/><rect x="596" y="413" width="1" height="1" fill="#fff"/><rect x="597" y="413" width="1" height="1" fill="#fff"/><rect x="599" y="413" width="1" height="1" fill="#fff"/><rect x="600" y="413" width="1" height="1" fill="#800000"/><rect x="600" y="412" width="1" height="1" fill="#800000"/><rect x="601" y="413" width="1" height="1" fill="#800000"/><rect x="602" y="412" width="1" height="1" fill="#800000"/><rect x="604" y="413" width="1" height="1" fill="#800000"/><rect x="605" y="413" width="1" height="1" fill="#fff"/><rect x="606" y="413" width="1" height="1" fill="#800000"/><rect x="607" y="413" width="1" height="1" fill="#800000"/><rect x="608" y="413" width="1" height="1" fill="#800000"/><rect x="609" y="413" width="1" height="1" fill="#800000"/><rect x="611" y="413" width="1" height="1" fill="#800000"/><rect x="612" y="413" width="1" height="1" fill="#800000"/><rect x="614" y="413" width="1" height="1" fill="#fff"/><rect x="614" y="412" width="1" height="1" fill="#008000"/><rect x="615" y="413" width="1" height="1" fill="#800000"/><rect x="616" y="413" width="1" height="1" fill="#fff"/><rect x="617" y="413" width="1" height="1" fill="#800000"/><rect x="617" y="412" width="1" height="1" fill="#800000"/><rect x="618" y="413" width="1" height="1" fill="#800000"/><rect x="618" y="412" width="1" height="1" fill="#800000"/><rect x="619" y="412" width="1" height="1" fill="#008000"/><rect x="620" y="413" width="1" height="1" fill="#800000"/><rect x="621" y="413" width="1" height="1" fill="#800000"/><rect x="622" y="413" width="1" height="1" fill="#800000"/><rect x="625" y="413" width="1" height="1" fill="#800000"/><rect x="625" y="412" width="1" height="1" fill="#800000"/><rect x="626" y="413" width="1" height="1" fill="#800000"/><rect x="626" y="412" width="1" height="1" fill="#800000"/><rect x="627" y="413" width="1" height="1" fill="#fff"/><rect x="629" y="413" width="1" height="1" fill="#fff"/><rect x="631" y="413" width="1" height="1" fill="#fff"/><rect x="632" y="413" width="1" height="1" fill="#800000"/><rect x="634" y="413" width="1" height="1" fill="#800000"/><rect x="636" y="413" width="1" height="1" fill="#800000"/><rect x="637" y="413" width="1" height="1" fill="#fff"/><rect x="638" y="413" width="1" height="1" fill="#800000"/><rect x="639" y="413" width="1" height="1" fill="#fff"/><rect x="640" y="412" width="1" height="1" fill="#800000"/><rect x="641" y="413" width="1" height="1" fill="#800000"/><rect x="641" y="412" width="1" height="1" fill="#008000"/><rect x="642" y="413" width="1" height="1" fill="#800000"/><rect x="643" y="413" width="1" height="1" fill="#fff"/><rect x="643" y="412" width="1" height="1" fill="#800000"/><rect x="644" y="413" width="1" height="1" fill="#800000"/><rect x="644" y="412" width="1" height="1" fill="#800000"/><rect x="645" y="413" width="1" height="1" fill="#800000"/><rect x="646" y="412" width="1" height="1" fill="#008000"/><rect x="647" y="413" width="1" height="1" fill="#800000"/><rect x="648" y="413" width="1" height="1" fill="#fff"/><rect x="650" y="413" width="1" height="1" fill="#800000"/><rect x="651" y="413" width="1" height="1" fill="#fff"/><rect x="78" y="438" width="1" height="23" fill="#800000"/><rect x="81" y="439" width="1" height="22" fill="#800000"/><rect x="85" y="438" width="1" height="23" fill="#800000"/><rect x="89" y="438" width="1" height="23" fill="#800000"/><rect x="92" y="438" width="1" height="23" fill="#800000"/><rect x="96" y="438" width="1" height="23" fill="#800000"/><rect x="99" y="438" width="1" height="23" fill="#800000"/><rect x="103" y="439" width="1" height="22" fill="#800000"/><rect x="107" y="439" width="1" height="22" fill="#800000"/><rect x="110" y="438" width="1" height="24" fill="#800000"/><rect x="114" y="438" width="1" height="23" fill="#800000"/><rect x="118" y="438" width="1" height="23" fill="#800000"/><rect x="121" y="438" width="1" height="23" fill="#800000"/><rect x="125" y="438" width="1" height="23" fill="#800000"/><rect x="132" y="438" width="1" height="23" fill="#800000"/><rect x="139" y="438" width="1" height="23" fill="#800000"/><rect x="143" y="438" width="1" height="23" fill="#800000"/><rect x="147" y="438" width="1" height="23" fill="#800000"/><rect x="150" y="439" width="1" height="22" fill="#800000"/><rect x="154" y="438" width="1" height="23" fill="#800000"/><rect x="158" y="438" width="1" height="24" fill="#800000"/><rect x="161" y="439" width="1" height="22" fill="#800000"/><rect x="165" y="439" width="1" height="22" fill="#800000"/><rect x="169" y="438" width="1" height="23" fill="#800000"/><rect x="172" y="439" width="1" height="22" fill="#800000"/><rect x="176" y="438" width="1" height="23" fill="#800000"/><rect x="180" y="438" width="1" height="23" fill="#800000"/><rect x="183" y="438" width="1" height="23" fill="#800000"/><rect x="190" y="438" width="1" height="23" fill="#800000"/><rect x="198" y="438" width="1" height="24" fill="#800000"/><rect x="201" y="438" width="1" height="23" fill="#800000"/><rect x="205" y="438" width="1" height="23" fill="#800000"/><rect x="209" y="438" width="1" height="25" fill="#800000"/><rect x="212" y="439" width="1" height="22" fill="#800000"/><rect x="216" y="438" width="1" height="23" fill="#800000"/><rect x="220" y="439" width="1" height="23" fill="#800000"/><rect x="223" y="438" width="1" height="23" fill="#800000"/><rect x="227" y="438" width="1" height="23" fill="#800000"/><rect x="230" y="439" width="1" height="22" fill="#800000"/><rect x="234" y="439" width="1" height="23" fill="#800000"/><rect x="238" y="438" width="1" height="24" fill="#800000"/><rect x="241" y="438" width="1" height="24" fill="#800000"/><rect x="245" y="438" width="1" height="23" fill="#800000"/><rect x="249" y="439" width="1" height="22" fill="#800000"/><rect x="252" y="439" width="1" height="24" fill="#800000"/><rect x="256" y="439" width="1" height="22" fill="#800000"/><rect x="260" y="439" width="1" height="22" fill="#800000"/><rect x="263" y="438" width="1" height="23" fill="#800000"/><rect x="271" y="439" width="1" height="22" fill="#800000"/><rect x="274" y="438" width="1" height="23" fill="#800000"/><rect x="278" y="438" width="1" height="23" fill="#800000"/><rect x="281" y="438" width="1" height="23" fill="#800000"/><rect x="285" y="438" width="1" height="24" fill="#800000"/><rect x="289" y="438" width="1" height="23" fill="#800000"/><rect x="292" y="438" width="1" height="24" fill="#800000"/><rect x="307" y="438" width="1" height="23" fill="#800000"/><rect x="311" y="438" width="1" height="25" fill="#800000"/><rect x="314" y="439" width="1" height="23" fill="#800000"/><rect x="318" y="438" width="1" height="23" fill="#800000"/><rect x="321" y="438" width="1" height="23" fill="#800000"/><rect x="325" y="438" width="1" height="23" fill="#800000"/><rect x="329" y="438" width="1" height="23" fill="#800000"/><rect x="332" y="438" width="1" height="25" fill="#800000"/><rect x="340" y="439" width="1" height="22" fill="#800000"/><rect x="343" y="439" width="1" height="22" fill="#800000"/><rect x="347" y="438" width="1" height="23" fill="#800000"/><rect x="351" y="439" width="1" height="22" fill="#800000"/><rect x="354" y="438" width="1" height="23" fill="#800000"/><rect x="358" y="438" width="1" height="23" fill="#800000"/><rect x="362" y="439" width="1" height="22" fill="#800000"/><rect x="365" y="438" width="1" height="23" fill="#800000"/><rect x="369" y="438" width="1" height="23" fill="#800000"/><rect x="372" y="439" width="1" height="22" fill="#800000"/><rect x="376" y="438" width="1" height="23" fill="#800000"/><rect x="380" y="438" width="1" height="23" fill="#800000"/><rect x="383" y="439" width="1" height="22" fill="#800000"/><rect x="387" y="438" width="1" height="23" fill="#800000"/><rect x="391" y="439" width="1" height="22" fill="#800000"/><rect x="402" y="438" width="1" height="25" fill="#800000"/><rect x="405" y="438" width="1" height="23" fill="#800000"/><rect x="409" y="439" width="1" height="23" fill="#800000"/><rect x="423" y="438" width="1" height="24" fill="#800000"/><rect x="427" y="438" width="1" height="23" fill="#800000"/><rect x="431" y="438" width="1" height="25" fill="#800000"/><rect x="434" y="438" width="1" height="23" fill="#800000"/><rect x="438" y="439" width="1" height="22" fill="#800000"/><rect x="442" y="438" width="1" height="23" fill="#800000"/><rect x="445" y="438" width="1" height="23" fill="#800000"/><rect x="449" y="438" width="1" height="23" fill="#800000"/><rect x="456" y="439" width="1" height="23" fill="#800000"/><rect x="463" y="438" width="1" height="23" fill="#800000"/><rect x="467" y="438" width="1" height="23" fill="#800000"/><rect x="471" y="438" width="1" height="23" fill="#800000"/><rect x="474" y="439" width="1" height="22" fill="#800000"/><rect x="478" y="438" width="1" height="23" fill="#800000"/><rect x="482" y="439" width="1" height="22" fill="#800000"/><rect x="485" y="438" width="1" height="24" fill="#800000"/><rect x="489" y="438" width="1" height="25" fill="#800000"/><rect x="493" y="438" width="1" height="23" fill="#800000"/><rect x="496" y="438" width="1" height="24" fill="#800000"/><rect x="500" y="438" width="1" height="25" fill="#800000"/><rect x="503" y="439" width="1" height="23" fill="#800000"/><rect x="511" y="438" width="1" height="23" fill="#800000"/><rect x="514" y="438" width="1" height="23" fill="#800000"/><rect x="518" y="438" width="1" height="23" fill="#800000"/><rect x="522" y="438" width="1" height="23" fill="#800000"/><rect x="525" y="439" width="1" height="22" fill="#800000"/><rect x="529" y="439" width="1" height="22" fill="#800000"/><rect x="533" y="438" width="1" height="23" fill="#800000"/><rect x="536" y="438" width="1" height="23" fill="#800000"/><rect x="540" y="439" width="1" height="22" fill="#800000"/><rect x="544" y="439" width="1" height="22" fill="#800000"/><rect x="547" y="438" width="1" height="23" fill="#800000"/><rect x="554" y="439" width="1" height="22" fill="#800000"/><rect x="558" y="438" width="1" height="24" fill="#800000"/><rect x="562" y="438" width="1" height="23" fill="#800000"/><rect x="565" y="438" width="1" height="23" fill="#800000"/><rect x="569" y="438" width="1" height="23" fill="#800000"/><rect x="573" y="438" width="1" height="23" fill="#800000"/><rect x="576" y="439" width="1" height="22" fill="#800000"/><rect x="580" y="438" width="1" height="23" fill="#800000"/><rect x="584" y="438" width="1" height="23" fill="#800000"/><rect x="587" y="438" width="1" height="23" fill="#800000"/><rect x="591" y="438" width="1" height="24" fill="#800000"/><rect x="594" y="438" width="1" height="23" fill="#800000"/><rect x="598" y="439" width="1" height="23" fill="#800000"/><rect x="602" y="439" width="1" height="22" fill="#800000"/><rect x="605" y="438" width="1" height="24" fill="#800000"/><rect x="609" y="439" width="1" height="23" fill="#800000"/><rect x="613" y="439" width="1" height="22" fill="#800000"/><rect x="616" y="438" width="1" height="23" fill="#800000"/><rect x="620" y="439" width="1" height="22" fill="#800000"/><rect x="624" y="438" width="1" height="23" fill="#800000"/><rect x="627" y="438" width="1" height="23" fill="#800000"/><rect x="631" y="438" width="1" height="23" fill="#800000"/><rect x="635" y="438" width="1" height="23" fill="#800000"/><rect x="638" y="438" width="1" height="24" fill="#800000"/><rect x="642" y="438" width="1" height="23" fill="#800000"/><rect x="645" y="439" width="1" height="23" fill="#800000"/><rect x="649" y="438" width="1" height="23" fill="#800000"/><rect x="128" y="438" width="1" height="23" fill="#fff"/><rect x="135" y="438" width="1" height="23" fill="#fff"/><rect x="186" y="438" width="1" height="23" fill="#fff"/><rect x="192" y="438" width="1" height="23" fill="#fff"/><rect x="268" y="438" width="1" height="23" fill="#fff"/><rect x="334" y="438" width="1" height="23" fill="#fff"/><rect x="393" y="438" width="1" height="23" fill="#fff"/><rect x="399" y="438" width="1" height="23" fill="#fff"/><rect x="451" y="438" width="1" height="23" fill="#fff"/><rect x="458" y="438" width="1" height="23" fill="#fff"/><rect x="506" y="438" width="1" height="23" fill="#fff"/><rect x="507" y="438" width="1" height="23" fill="#fff"/><rect x="552" y="438" width="1" height="23" fill="#fff"/><rect x="73" y="279" width="1" height="134" fill="#008000"/><rect x="73" y="413" width="1" height="53" fill="#800000"/><rect x="74" y="370" width="1" height="43" fill="#008000"/><rect x="232" y="279" width="1" height="134" fill="#008000"/><rect x="232" y="461" width="1" height="5" fill="#800000"/><rect x="156" y="411" width="1" height="55" fill="#800000"/><rect x="460" y="294" width="1" height="119" fill="#008000"/><rect x="555" y="279" width="1" height="134" fill="#008000"/><rect x="554" y="370" width="1" height="43" fill="#008000"/><rect x="555" y="461" width="1" height="4" fill="#800000"/><rect x="560" y="406" width="1" height="20" fill="#800000"/><rect x="366" y="406" width="1" height="7" fill="#800000"/><rect x="296" y="256" width="9" height="146" fill="#800000"/><rect x="296" y="250" width="1" height="6" fill="#800000"/><rect x="295" y="333" width="1" height="78" fill="#800000"/><rect x="305" y="408" width="1" height="4" fill="#800000"/><rect x="304" y="402" width="1" height="13" fill="#800000"/><rect x="298" y="329" width="1" height="73" fill="#fff"/><rect x="302" y="332" width="1" height="70" fill="#fff"/><rect x="295" y="411" width="1" height="151" fill="#008000"/><rect x="304" y="461" width="1" height="35" fill="#008000"/><rect x="303" y="496" width="1" height="35" fill="#008000"/><path d="M303.5,531 L295.5,562.5" stroke="#008000" stroke-width="1" fill="none" shape-rendering="auto"/><rect x="415" y="256" width="5" height="124" fill="#008000"/><rect x="416" y="380" width="4" height="22" fill="#008000"/><rect x="419" y="402" width="1" height="42" fill="#008000"/><rect x="419" y="444" width="1" height="56" fill="#800000"/><rect x="418" y="500" width="1" height="31" fill="#800000"/><path d="M418.5,531 L411.5,562" stroke="#800000" stroke-width="1" fill="none" shape-rendering="auto"/><rect x="414" y="380" width="1" height="133" fill="#008000"/><rect x="413" y="513" width="1" height="17" fill="#008000"/><rect x="412" y="528" width="1" height="17" fill="#008000"/><rect x="411" y="461" width="1" height="89" fill="#008000"/><rect x="411" y="550" width="1" height="12" fill="#800000"/></svg>
<span class="t" style="left:21.7px;top:419.5px;font-size:13px;line-height:13px;letter-spacing:-0.3px;transform-origin:0 0;transform:rotate(-90deg) translateY(-10.5px);">Mbps</span>
<div style="left:690px;top:211px;width:143px;height:408px;background:#000;"></div>
<div style="left:691px;top:212px;width:141px;height:407px;background:#FFFFFF;"></div>
<div style="left:833px;top:189px;width:1px;height:430px;background:#F0EEE4;"></div>
<div style="left:697px;top:218px;width:19px;height:1px;background:#800000;"></div>
<div style="left:697px;top:231px;width:19px;height:1px;background:#008000;"></div>
<div style="left:816px;top:212px;width:16px;height:390px;background:linear-gradient(90deg,#F1EFE8,#FEFEFB);"></div>
<div style="left:691px;top:602px;width:125px;height:17px;background:linear-gradient(180deg,#F1EFE8,#FEFEFB);"></div>
<div style="left:816px;top:602px;width:16px;height:17px;background:#ECE9D8;"></div>
<div style="left:816px;top:212px;width:16px;height:17px;border:1px solid #fff;border-radius:3px;background:#EEEDE5;box-shadow:inset 0 0 0 1px #E0DED0;"></div>
<svg style="left:0;top:0" width="834" height="647"><path d="M820.0,222.5 L824.0,218.5 L828.0,222.5" fill="none" stroke="#C9C7BA" stroke-width="2"/></svg>
<div style="left:816px;top:585px;width:16px;height:17px;border:1px solid #fff;border-radius:3px;background:#EEEDE5;box-shadow:inset 0 0 0 1px #E0DED0;"></div>
<svg style="left:0;top:0" width="834" height="647"><path d="M820.0,591.5 L824.0,595.5 L828.0,591.5" fill="none" stroke="#C9C7BA" stroke-width="2"/></svg>
<div style="left:691px;top:602px;width:17px;height:17px;border:1px solid #fff;border-radius:3px;background:#EEEDE5;box-shadow:inset 0 0 0 1px #E0DED0;"></div>
<svg style="left:0;top:0" width="834" height="647"><path d="M701.5,606.5 L697.5,610.5 L701.5,614.5" fill="none" stroke="#C9C7BA" stroke-width="2"/></svg>
<div style="left:798px;top:602px;width:17px;height:17px;border:1px solid #fff;border-radius:3px;background:#EEEDE5;box-shadow:inset 0 0 0 1px #E0DED0;"></div>
<svg style="left:0;top:0" width="834" height="647"><path d="M804.5,606.5 L808.5,610.5 L804.5,614.5" fill="none" stroke="#C9C7BA" stroke-width="2"/></svg>
<div style="left:0px;top:619px;width:834px;height:28px;background:#ECE9D8;"></div>
<div style="left:0px;top:620px;width:834px;height:1px;background:#D8D4C4;"></div>
<div style="left:0px;top:621px;width:834px;height:1px;background:#A8A494;"></div>
<div style="left:0px;top:622px;width:834px;height:1px;background:#716F64;"></div>
<div style="left:0px;top:624px;width:834px;height:1px;background:#F4F2E8;"></div>
<div style="left:2px;top:627px;width:69px;height:18px;border-top:1px solid #ACA899;border-left:1px solid #807C6C;border-right:1px solid #fff;border-bottom:1px solid #fff;box-shadow:inset 1px 1px 0 #807C6C;"></div>
<div style="left:76px;top:627px;width:163px;height:18px;border-top:1px solid #ACA899;border-left:1px solid #807C6C;border-right:1px solid #fff;border-bottom:1px solid #fff;box-shadow:inset 1px 1px 0 #807C6C;"></div>
<div style="left:243px;top:627px;width:159.5px;height:18px;border-top:1px solid #ACA899;border-left:1px solid #807C6C;border-right:1px solid #fff;border-bottom:1px solid #fff;box-shadow:inset 1px 1px 0 #807C6C;"></div>
<div style="left:408px;top:627px;width:134px;height:18px;border-top:1px solid #ACA899;border-left:1px solid #807C6C;border-right:1px solid #fff;border-bottom:1px solid #fff;box-shadow:inset 1px 1px 0 #807C6C;"></div>
<div style="left:547px;top:627px;width:95.5px;height:18px;border-top:1px solid #ACA899;border-left:1px solid #807C6C;border-right:1px solid #fff;border-bottom:1px solid #fff;box-shadow:inset 1px 1px 0 #807C6C;"></div>
<span class="t" style="left:4.10px;top:2px;font-size:11.2px;line-height:15px;color:#000;letter-spacing:-0.533px;">File</span>
<span class="t" style="left:32.10px;top:2px;font-size:11.2px;line-height:15px;color:#000;letter-spacing:-0.533px;">Edit</span>
<span class="t" style="left:63.00px;top:2px;font-size:11.2px;line-height:15px;color:#000;letter-spacing:-0.800px;">View</span>
<span class="t" style="left:96.10px;top:2px;font-size:11.2px;line-height:15px;color:#000;letter-spacing:-0.400px;">Run</span>
<span class="t" style="left:128.00px;top:2px;font-size:11.2px;line-height:15px;color:#000;letter-spacing:-0.480px;">Window</span>
<span class="t" style="left:177.10px;top:2px;font-size:11.2px;line-height:15px;color:#000;letter-spacing:-0.267px;">Help</span>
<span class="t" style="left:769.58px;top:23px;font-size:20px;line-height:26px;color:#000;font-weight:bold;transform-origin:0 0;transform:scaleX(1.1333);-webkit-text-stroke:0.9px #000;">net</span>
<span class="t" style="left:806.10px;top:26px;font-size:16.6px;line-height:22px;color:#fff;font-weight:bold;letter-spacing:2.880px;-webkit-text-stroke:0.5px #fff;">iQ</span>
<span class="t" style="left:402.00px;top:26px;font-size:8.5px;line-height:11px;color:#000;font-weight:bold;transform-origin:0 0;transform:scaleX(0.7881);">Pair 1</span>
<span class="t" style="left:402.00px;top:36px;font-size:8.5px;line-height:11px;color:#000;font-weight:bold;transform-origin:0 0;transform:scaleX(0.8238);">Pair 2</span>
<span class="t" style="left:437.04px;top:31px;font-size:10px;line-height:13px;color:#000;letter-spacing:0.560px;">ALL</span>
<span class="t" style="left:462.48px;top:30px;font-size:10px;line-height:13px;color:#000;letter-spacing:-0.560px;">TCP</span>
<span class="t" style="left:487.10px;top:30px;font-size:10px;line-height:13px;color:#000;letter-spacing:0.160px;">SCR</span>
<span class="t" style="left:513.60px;top:30px;font-size:10px;line-height:13px;color:#000;letter-spacing:0.160px;">EP1</span>
<span class="t" style="left:540.10px;top:30px;font-size:10px;line-height:13px;color:#000;letter-spacing:0.480px;">EP2</span>
<span class="t" style="left:568.06px;top:30px;font-size:10px;line-height:13px;color:#000;letter-spacing:-1.920px;">SQ</span>
<span class="t" style="left:593.60px;top:30px;font-size:10px;line-height:13px;color:#000;letter-spacing:0.320px;">PG</span>
<span class="t" style="left:619.10px;top:30px;font-size:10px;line-height:13px;color:#000;letter-spacing:0.800px;">PC</span>
<span class="t" style="left:8.00px;top:59px;font-size:12.5px;line-height:16px;color:#000;transform-origin:0 0;transform:scaleX(0.8766);">Test Setup</span>
<span class="t" style="left:71.02px;top:57px;font-size:12.5px;line-height:16px;color:#000;transform-origin:0 0;transform:scaleX(0.8760);">Throughput</span>
<span class="t" style="left:138.75px;top:59px;font-size:12.5px;line-height:16px;color:#000;transform-origin:0 0;transform:scaleX(0.8657);">Transaction Rate</span>
<span class="t" style="left:231.60px;top:59px;font-size:12.5px;line-height:16px;color:#000;transform-origin:0 0;transform:scaleX(0.8685);">Response Time</span>
<span class="t" style="left:317.62px;top:59px;font-size:12.5px;line-height:16px;color:#000;transform-origin:0 0;transform:scaleX(0.8902);">Raw Data Totals</span>
<span class="t" style="left:410.08px;top:59px;font-size:12.5px;line-height:16px;color:#000;transform-origin:0 0;transform:scaleX(0.8483);">Endpoint Configuration</span>
<span class="t" style="left:7.50px;top:98px;font-size:12.5px;line-height:16px;color:#000;transform-origin:0 0;transform:scaleX(0.8336);">Group</span>
<span class="t" style="left:97.85px;top:98px;font-size:12.5px;line-height:16px;color:#000;transform-origin:0 0;transform:scaleX(0.8654);">Run Status</span>
<span class="t" style="left:203.75px;top:85px;font-size:12.5px;line-height:16px;color:#000;transform-origin:0 0;transform:scaleX(0.8442);">Timing Records</span>
<span class="t" style="left:227.50px;top:98px;font-size:12.5px;line-height:16px;color:#000;transform-origin:0 0;transform:scaleX(0.8354);">Completed</span>
<span class="t" style="left:288.75px;top:85px;font-size:12.5px;line-height:16px;color:#000;transform-origin:0 0;transform:scaleX(0.8401);">95% Confidence</span>
<span class="t" style="left:330.35px;top:98px;font-size:12.5px;line-height:16px;color:#000;transform-origin:0 0;transform:scaleX(0.8784);">Interval</span>
<span class="t" style="left:376.25px;top:85px;font-size:12.5px;line-height:16px;color:#000;transform-origin:0 0;transform:scaleX(0.8643);">Average</span>
<span class="t" style="left:383.60px;top:98px;font-size:12.5px;line-height:16px;color:#000;transform-origin:0 0;transform:scaleX(0.8718);">(Mbps)</span>
<span class="t" style="left:427.10px;top:85px;font-size:12.5px;line-height:16px;color:#000;transform-origin:0 0;transform:scaleX(0.8341);">Minimum</span>
<span class="t" style="left:435.85px;top:98px;font-size:12.5px;line-height:16px;color:#000;transform-origin:0 0;transform:scaleX(0.8716);">(Mbps)</span>
<span class="t" style="left:479.10px;top:85px;font-size:12.5px;line-height:16px;color:#000;transform-origin:0 0;transform:scaleX(0.8310);">Maximum</span>
<span class="t" style="left:490.85px;top:98px;font-size:12.5px;line-height:16px;color:#000;transform-origin:0 0;transform:scaleX(0.8716);">(Mbps)</span>
<span class="t" style="left:535.85px;top:85px;font-size:12.5px;line-height:16px;color:#000;transform-origin:0 0;transform:scaleX(0.8650);">Measured</span>
<span class="t" style="left:535.00px;top:98px;font-size:12.5px;line-height:16px;color:#000;transform-origin:0 0;transform:scaleX(0.8530);">Time (sec)</span>
<span class="t" style="left:597.85px;top:85px;font-size:12.5px;line-height:16px;color:#000;transform-origin:0 0;transform:scaleX(0.8895);">Relative</span>
<span class="t" style="left:593.60px;top:98px;font-size:12.5px;line-height:16px;color:#000;transform-origin:0 0;transform:scaleX(0.8620);">Precision</span>
<span class="t" style="left:42.00px;top:120px;font-size:12.5px;line-height:16px;color:#000;font-weight:bold;transform-origin:0 0;transform:scaleX(0.9355);">All Pairs</span>
<span class="t" style="left:246.25px;top:120px;font-size:12.5px;line-height:16px;color:#000;font-weight:bold;transform-origin:0 0;transform:scaleX(0.9744);">3 164</span>
<span class="t" style="left:376.60px;top:120px;font-size:12.5px;line-height:16px;color:#000;font-weight:bold;transform-origin:0 0;transform:scaleX(1.0432);">14,070</span>
<span class="t" style="left:437.00px;top:120px;font-size:12.5px;line-height:16px;color:#000;font-weight:bold;transform-origin:0 0;transform:scaleX(1.0260);">0,327</span>
<span class="t" style="left:484.10px;top:120px;font-size:12.5px;line-height:16px;color:#000;font-weight:bold;transform-origin:0 0;transform:scaleX(1.0432);">16,327</span>
<span class="t" style="left:64.60px;top:136px;font-size:12.5px;line-height:16px;color:#000;transform-origin:0 0;transform:scaleX(0.8388);">Pair 1</span>
<span class="t" style="left:96.60px;top:136px;font-size:12.5px;line-height:16px;color:#000;transform-origin:0 0;transform:scaleX(0.8537);">Finished: Warning(s)</span>
<span class="t" style="left:250.35px;top:136px;font-size:12.5px;line-height:16px;color:#000;transform-origin:0 0;transform:scaleX(0.8647);">1 591</span>
<span class="t" style="left:340.00px;top:136px;font-size:12.5px;line-height:16px;color:#000;transform-origin:0 0;transform:scaleX(0.8691);">0,176</span>
<span class="t" style="left:391.25px;top:136px;font-size:12.5px;line-height:16px;color:#000;transform-origin:0 0;transform:scaleX(0.8571);">7,111</span>
<span class="t" style="left:442.50px;top:136px;font-size:12.5px;line-height:16px;color:#000;transform-origin:0 0;transform:scaleX(0.8410);">0,364</span>
<span class="t" style="left:490.85px;top:136px;font-size:12.5px;line-height:16px;color:#000;transform-origin:0 0;transform:scaleX(0.8889);">16,327</span>
<span class="t" style="left:544.85px;top:136px;font-size:12.5px;line-height:16px;color:#000;transform-origin:0 0;transform:scaleX(0.8879);">178,986</span>
<span class="t" style="left:612.00px;top:136px;font-size:12.5px;line-height:16px;color:#000;transform-origin:0 0;transform:scaleX(0.8164);">2,481</span>
<span class="t" style="left:64.60px;top:152px;font-size:12.5px;line-height:16px;color:#000;transform-origin:0 0;transform:scaleX(0.8641);">Pair 2</span>
<span class="t" style="left:96.60px;top:152px;font-size:12.5px;line-height:16px;color:#000;transform-origin:0 0;transform:scaleX(0.8537);">Finished: Warning(s)</span>
<span class="t" style="left:250.35px;top:152px;font-size:12.5px;line-height:16px;color:#000;transform-origin:0 0;transform:scaleX(0.8922);">1 573</span>
<span class="t" style="left:340.00px;top:152px;font-size:12.5px;line-height:16px;color:#000;transform-origin:0 0;transform:scaleX(0.8691);">0,199</span>
<span class="t" style="left:391.25px;top:152px;font-size:12.5px;line-height:16px;color:#000;transform-origin:0 0;transform:scaleX(0.8390);">7,030</span>
<span class="t" style="left:442.50px;top:152px;font-size:12.5px;line-height:16px;color:#000;transform-origin:0 0;transform:scaleX(0.8667);">0,327</span>
<span class="t" style="left:490.85px;top:152px;font-size:12.5px;line-height:16px;color:#000;transform-origin:0 0;transform:scaleX(0.8906);">16,000</span>
<span class="t" style="left:544.85px;top:152px;font-size:12.5px;line-height:16px;color:#000;transform-origin:0 0;transform:scaleX(0.8713);">179,004</span>
<span class="t" style="left:612.00px;top:152px;font-size:12.5px;line-height:16px;color:#000;transform-origin:0 0;transform:scaleX(0.8429);">2,830</span>
<span class="t" style="left:13.00px;top:201px;font-size:19px;line-height:25px;color:#000;letter-spacing:0.267px;-webkit-text-stroke:0.25px #000;">Throughput</span>
<span class="t" style="left:36.06px;top:563px;font-size:11px;line-height:14px;color:#000;letter-spacing:-0.120px;">0,000</span>
<span class="t" style="left:36.06px;top:523px;font-size:11px;line-height:14px;color:#000;letter-spacing:-0.120px;">2,000</span>
<span class="t" style="left:36.06px;top:484px;font-size:11px;line-height:14px;color:#000;letter-spacing:-0.120px;">4,000</span>
<span class="t" style="left:36.06px;top:445px;font-size:11px;line-height:14px;color:#000;letter-spacing:-0.120px;">6,000</span>
<span class="t" style="left:36.06px;top:406px;font-size:11px;line-height:14px;color:#000;letter-spacing:-0.120px;">8,000</span>
<span class="t" style="left:29.64px;top:367px;font-size:11px;line-height:14px;color:#000;letter-spacing:0.032px;">10,000</span>
<span class="t" style="left:29.64px;top:328px;font-size:11px;line-height:14px;color:#000;letter-spacing:0.032px;">12,000</span>
<span class="t" style="left:29.64px;top:289px;font-size:11px;line-height:14px;color:#000;letter-spacing:0.032px;">14,000</span>
<span class="t" style="left:29.64px;top:250px;font-size:11px;line-height:14px;color:#000;letter-spacing:0.032px;">16,000</span>
<span class="t" style="left:29.64px;top:230px;font-size:11px;line-height:14px;color:#000;letter-spacing:0.032px;">17,000</span>
<span class="t" style="left:55.75px;top:574px;font-size:11px;line-height:14px;color:#000;letter-spacing:-0.133px;">0:00:00</span>
<span class="t" style="left:151.75px;top:574px;font-size:11px;line-height:14px;color:#000;letter-spacing:-0.133px;">0:00:30</span>
<span class="t" style="left:248.75px;top:574px;font-size:11px;line-height:14px;color:#000;letter-spacing:-0.133px;">0:01:00</span>
<span class="t" style="left:345.75px;top:574px;font-size:11px;line-height:14px;color:#000;letter-spacing:-0.133px;">0:01:30</span>
<span class="t" style="left:441.75px;top:574px;font-size:11px;line-height:14px;color:#000;letter-spacing:-0.133px;">0:02:00</span>
<span class="t" style="left:538.75px;top:574px;font-size:11px;line-height:14px;color:#000;letter-spacing:-0.133px;">0:02:30</span>
<span class="t" style="left:635.75px;top:574px;font-size:11px;line-height:14px;color:#000;letter-spacing:-0.133px;">0:03:00</span>
<span class="t" style="left:294.08px;top:595px;font-size:13.33px;line-height:17px;color:#000;letter-spacing:-0.046px;">Elapsed time (h:mm:ss)</span>
<span class="t" style="left:736.83px;top:192px;font-size:12.8px;line-height:17px;color:#000;font-weight:bold;transform-origin:0 0;transform:scaleX(1.0750);-webkit-text-stroke:0.3px #000;">Legend</span>
<span class="t" style="left:718.60px;top:211px;font-size:12.5px;line-height:16px;color:#800000;transform-origin:0 0;transform:scaleX(0.8451);">Pair 1 -- wan -&gt; lan</span>
<span class="t" style="left:718.60px;top:224px;font-size:12.5px;line-height:16px;color:#008000;transform-origin:0 0;transform:scaleX(0.8451);">Pair 2 -- wan -&gt; lan</span>
<span class="t" style="left:4.60px;top:628px;font-size:12.5px;line-height:16px;color:#000;transform-origin:0 0;transform:scaleX(0.8615);">Pairs: 2</span>
<span class="t" style="left:78.60px;top:628px;font-size:12.5px;line-height:16px;color:#000;transform-origin:0 0;transform:scaleX(0.8699);">Start: 10.05.2006, 4:40:47</span>
<span class="t" style="left:246.10px;top:628px;font-size:12.5px;line-height:16px;color:#000;transform-origin:0 0;transform:scaleX(0.8661);">End: 10.05.2006, 4:43:47</span>
<span class="t" style="left:410.10px;top:628px;font-size:12.5px;line-height:16px;color:#000;transform-origin:0 0;transform:scaleX(0.8567);">Run time: 00:03:00</span>
<span class="t" style="left:549.60px;top:628px;font-size:12.5px;line-height:16px;color:#000;transform-origin:0 0;transform:scaleX(0.8619);">Ran to completion</span>
</div></body></html>
